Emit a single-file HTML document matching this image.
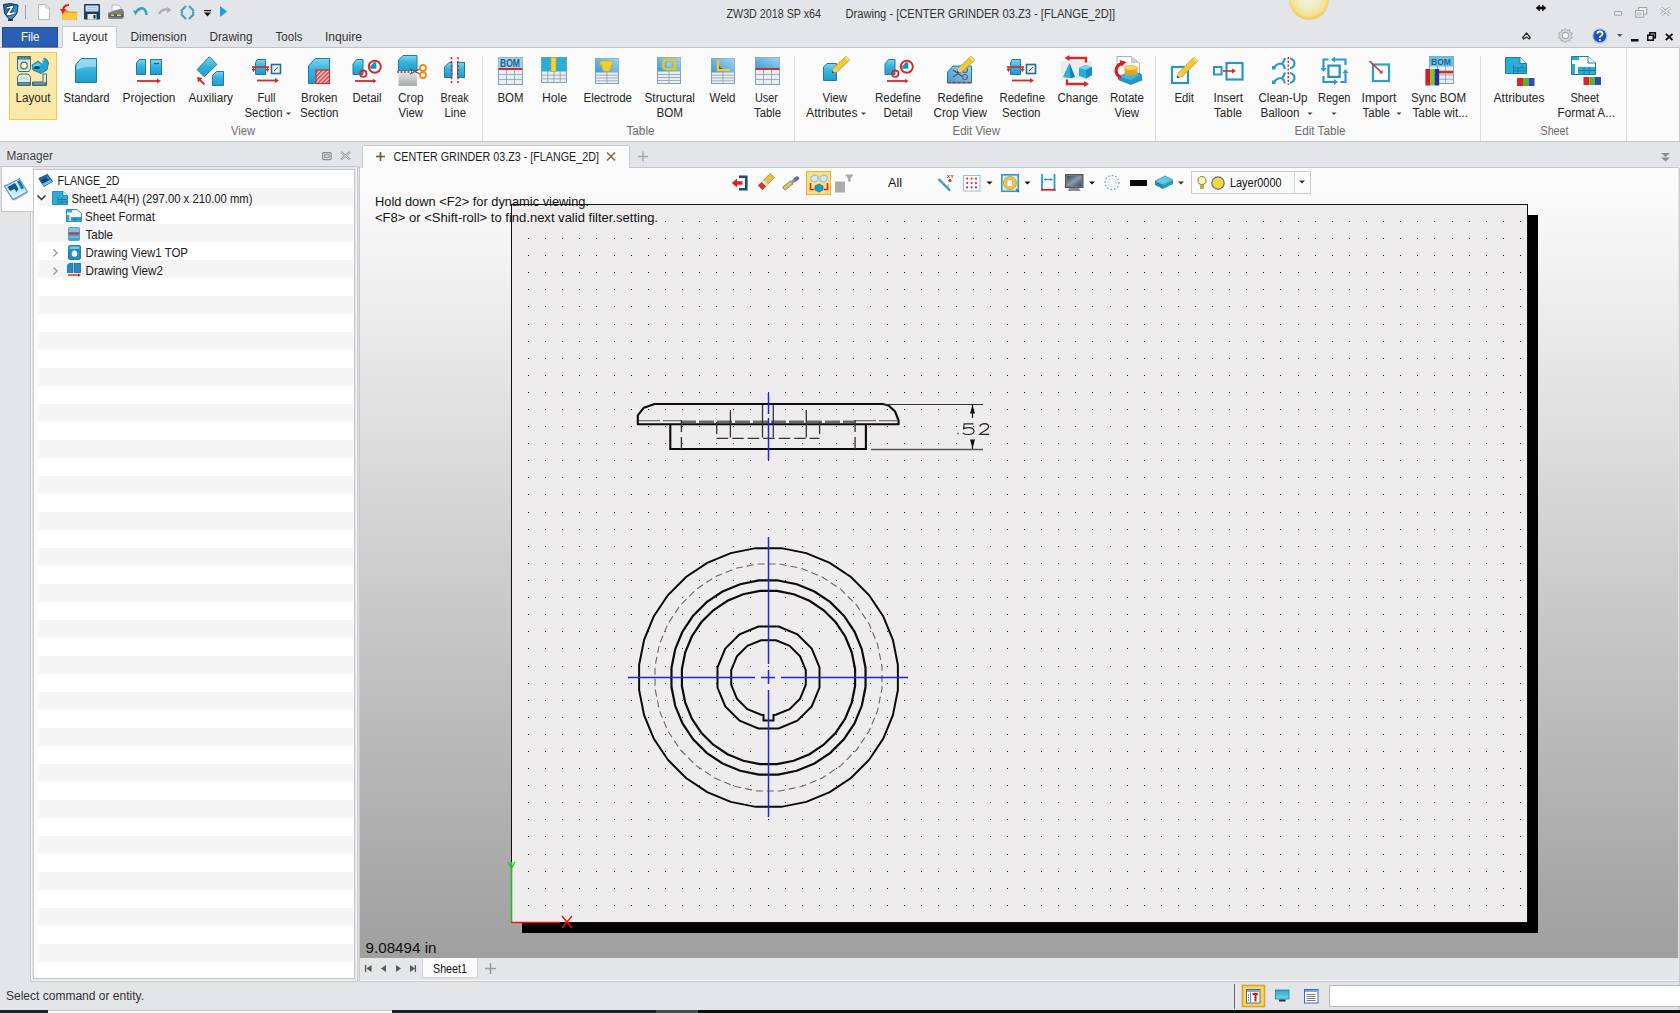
<!DOCTYPE html>
<html><head><meta charset="utf-8"><title>ZW3D</title>
<style>html,body{margin:0;padding:0;background:#e3e5e8;overflow:hidden}
svg{display:block} text{font-family:"Liberation Sans", sans-serif}</style></head>
<body><svg width="1680" height="1013" viewBox="0 0 1680 1013" shape-rendering="auto">
<rect x="0" y="0" width="1680" height="47" fill="#e3e5e8" />
<rect x="0" y="47" width="1680" height="94" fill="#fbfbfb" />
<line x1="0" y1="47.5" x2="1680" y2="47.5" stroke="#bfc2c6" stroke-width="1" />
<line x1="0" y1="141.5" x2="1680" y2="141.5" stroke="#c6c8cc" stroke-width="1" />
<rect x="0" y="142" width="1680" height="26" fill="#e3e5e8" />
<rect x="0" y="166" width="358" height="814" fill="#e3e5e8" />
<rect x="0" y="980" width="1680" height="30" fill="#e3e5e8" />
<rect x="0" y="1010" width="48" height="3" fill="#222326" />
<rect x="48" y="1010" width="344" height="1" fill="#c4c5c7" />
<rect x="48" y="1011" width="344" height="2" fill="#fafafa" />
<rect x="392" y="1010" width="264" height="3" fill="#1c1e22" />
<rect x="656" y="1010" width="42" height="3" fill="#4a4b4d" />
<rect x="698" y="1010" width="982" height="3" fill="#0c0c0c" />
<defs><linearGradient id="lg" x1="0" y1="0" x2="1" y2="1"><stop offset="0" stop-color="#1560a8"/><stop offset="1" stop-color="#38b4f2"/></linearGradient></defs>
<g transform="translate(2,3)"><path d="M1.5 1.5 L8.5 0.5 L16 2 L15 10 Q12.5 14.5 8.5 17 Q4.5 14 2.5 10 Z" fill="url(#lg)" stroke="#0f2f52" stroke-width="1"/><path d="M5 5 L10.5 3.5 L5.5 11.5 L12.5 10" fill="none" stroke="#111" stroke-width="3.2" stroke-linejoin="round"/><path d="M5 5 L10.5 3.5 L5.5 11.5 L12.5 10" fill="none" stroke="#fff" stroke-width="1.8" stroke-linejoin="round"/><path d="M6 17 H11" stroke="#111" stroke-width="1.5"/></g>
<line x1="25.5" y1="5" x2="25.5" y2="19" stroke="#9a9ca0" stroke-width="1" />
<g transform="translate(38,4)"><path d="M0.5 0.5 H8 L11.5 4 V15.5 H0.5 Z" fill="#fdfdfd" stroke="#b9bcc0"/><path d="M8 0.5 V4 H11.5" fill="none" stroke="#b9bcc0"/></g>
<g transform="translate(60,4)"><path d="M2 6 H8 L9 7.5 H17 V16 H2 Z" fill="#e9a521"/><path d="M3 9 H18 L16 16 H2 Z" fill="#f7c94a"/><path d="M9 1 Q3 1 3 7" fill="none" stroke="#d9261c" stroke-width="2.2"/><path d="M0 5 L3 10 L6 5 Z" fill="#d9261c"/></g>
<g transform="translate(84,4)"><rect x="0" y="0" width="16" height="15.5" rx="1" fill="#173d63"/><rect x="1.5" y="1.5" width="13" height="6" fill="#cfe3f2"/><path d="M3 3.5 H13 M3 5.5 H13" stroke="#8fb3cf" stroke-width=".7"/><rect x="3.5" y="10" width="9" height="5.5" fill="#e9e9e9"/><rect x="9.5" y="11" width="2" height="3.5" fill="#1a2a3a"/></g>
<g transform="translate(107,4)"><path d="M5 1 H12 L14 4 V7 H5 Z" fill="#f7f7f7" stroke="#9a9a9a" stroke-width=".6"/><path d="M3 8 L13 5 H15 Q17 6 17 9 V13 Q16 15 14 15 H3 Q1 15 1 13 V10 Q1 8 3 8 Z" fill="#7b7f83"/><path d="M2 10 H16 V13 H2 Z" fill="#5d6165"/><rect x="4" y="10.5" width="3" height="1.5" fill="#d8dc48"/><rect x="10" y="10.5" width="4" height="1.5" fill="#e6e04a"/></g>
<g transform="translate(133,6)"><path d="M2.5 6.5 Q6 1.5 10 2.5 Q13 3.5 13.5 9" fill="none" stroke="#36a2c8" stroke-width="2.6"/><path d="M0 4.5 L5 5 L2.5 9.5 Z" fill="#36a2c8"/></g>
<g transform="translate(157,6)"><path d="M2 8 Q5 2.5 11 3.5" fill="none" stroke="#a9acaf" stroke-width="2.4"/><path d="M10 1 L14.5 4 L10 7 Z" fill="#a9acaf"/></g>
<g transform="translate(179,4)"><g fill="none" stroke="#3ea4bf" stroke-width="2.2"><path d="M2 7 L7 2"/><path d="M10 2 L15 7"/><path d="M15 10 L10 15"/><path d="M7 15 L2 10"/></g><path d="M1 8.5 L4 6 L4 10 Z M16 8.5 L13 11 L13 7 Z" fill="#3ea4bf"/></g>
<g transform="translate(204,10)"><rect x="0" y="0" width="7" height="1.2" fill="#111"/><path d="M0 2.5 H7 L3.5 6.5 Z" fill="#111"/></g>
<g transform="translate(220,6)"><path d="M0 0 L7 5.5 L0 11 Z" fill="#1f9be8"/></g>
<text x="726.5" y="18" font-size="12" fill="#333" textLength="94.50" lengthAdjust="spacingAndGlyphs" >ZW3D 2018 SP x64</text>
<text x="845.5" y="18" font-size="12" fill="#333" textLength="269.50" lengthAdjust="spacingAndGlyphs" >Drawing - [CENTER GRINDER 03.Z3 - [FLANGE_2D]]</text>
<defs><radialGradient id="sun" cx="1309" cy="-2" r="21" gradientUnits="userSpaceOnUse"><stop offset="0" stop-color="#f4f3ee"/><stop offset=".55" stop-color="#f1ecbc"/><stop offset=".85" stop-color="#f2e08a"/><stop offset="1" stop-color="#f3c95a"/></radialGradient></defs>
<circle cx="1309" cy="0" r="19.8" fill="url(#sun)"/>
<g transform="translate(1536,5)"><path d="M0 3 L3.5 0 V2 H6.5 V0 L10 3 L6.5 6 V4 H3.5 V6 Z" fill="#111" stroke="#111" stroke-width=".6"/></g>
<g transform="translate(1614,11)"><rect x="0.6" y="0.6" width="7" height="3.6" rx="1" fill="#fff" stroke="#a4a6aa" stroke-width="1.2"/></g>
<g transform="translate(1635,7)"><rect x="3.6" y="0.6" width="8" height="6.5" fill="#fff" stroke="#a4a6aa" stroke-width="1.2"/><rect x="0.6" y="3.6" width="8" height="6.5" fill="#fff" stroke="#a4a6aa" stroke-width="1.2"/><rect x="2.6" y="6" width="3.5" height="2" fill="none" stroke="#a4a6aa" stroke-width=".9"/></g>
<g transform="translate(1660,7)"><path d="M1 1 L10 8 M10 1 L1 8" stroke="#a4a6aa" stroke-width="3.2"/><path d="M1 1 L10 8 M10 1 L1 8" stroke="#fff" stroke-width="1.4"/></g>
<g transform="translate(1522,32)"><path d="M0.8 5.5 L4.5 1 L8.2 5.5 L7.5 7 L4.5 5 L1.5 7 Z" fill="#fff" stroke="#222" stroke-width="1.2" stroke-linejoin="round"/></g>
<g transform="translate(1558,28)"><path d="M7.5 0.5 L9 2.5 L11.5 1.8 L11.8 4.2 L14.3 5 L13.3 7.5 L14.5 9.6 L12.2 10.6 L11.8 13.2 L9.3 12.8 L7.5 14.5 L5.7 12.8 L3.2 13.2 L2.8 10.6 L0.5 9.6 L1.7 7.5 L0.7 5 L3.2 4.2 L3.5 1.8 L6 2.5 Z" fill="#d9dadc" stroke="#a9abae" stroke-width="1"/><circle cx="7.5" cy="7.5" r="3.2" fill="#f4f4f4" stroke="#a9abae" stroke-width="1.2"/></g>
<g transform="translate(1592,28)"><circle cx="7.8" cy="7.8" r="7.6" fill="#9fc2e8"/><circle cx="7.8" cy="7.8" r="6.4" fill="#1f4fb8"/><path d="M5.3 5.8 Q5.5 3.3 8 3.3 Q10.5 3.4 10.5 5.7 Q10.4 7.2 8.8 8 Q7.9 8.5 7.9 9.8" fill="none" stroke="#fff" stroke-width="1.8"/><circle cx="7.9" cy="12" r="1.1" fill="#fff"/></g>
<g transform="translate(1617,34)"><path d="M0 0 H5.5 L2.75 3 Z" fill="#555"/></g>
<rect x="1631" y="39" width="7.5" height="2.5" fill="#111" />
<g transform="translate(1647,32)"><rect x="2.8" y="0.8" width="5.5" height="5" fill="none" stroke="#111" stroke-width="1.6"/><rect x="0.8" y="3.2" width="5.5" height="5" fill="#e3e5e8" stroke="#111" stroke-width="1.6"/></g>
<g transform="translate(1665,33)"><path d="M0.8 0.8 L7.5 7 M7.5 0.8 L0.8 7" stroke="#111" stroke-width="1.8"/></g>
<rect x="2" y="27" width="56" height="20" fill="#2b5fb4" />
<rect x="2.5" y="27.5" width="55" height="19.5" fill="none" stroke="#1d4c9c"/>
<text x="21" y="41" font-size="12" fill="#fff" textLength="18.50" lengthAdjust="spacingAndGlyphs" >File</text>
<rect x="62" y="26" width="55" height="22" fill="#fbfbfb" />
<path d="M62.5 47.5 V26.5 H116.5 V47.5" fill="none" stroke="#c9cbcf"/>
<text x="72.5" y="41" font-size="12" fill="#333" textLength="35.00" lengthAdjust="spacingAndGlyphs" >Layout</text>
<text x="130.5" y="41" font-size="12" fill="#333" textLength="56.00" lengthAdjust="spacingAndGlyphs" >Dimension</text>
<text x="209.5" y="41" font-size="12" fill="#333" textLength="43.00" lengthAdjust="spacingAndGlyphs" >Drawing</text>
<text x="275.5" y="41" font-size="12" fill="#333" textLength="27.00" lengthAdjust="spacingAndGlyphs" >Tools</text>
<text x="325" y="41" font-size="12" fill="#333" textLength="37.00" lengthAdjust="spacingAndGlyphs" >Inquire</text>
<defs>
<linearGradient id="tl" x1="0" y1="0" x2="0" y2="1"><stop offset="0" stop-color="#7fd6f0"/><stop offset=".45" stop-color="#36b4dc"/><stop offset="1" stop-color="#1f9ccb"/></linearGradient>
<linearGradient id="tlb" x1="1" y1="0" x2="0" y2="1"><stop offset="0" stop-color="#9fd6f2"/><stop offset="1" stop-color="#3d9ad6"/></linearGradient>
<linearGradient id="gr" x1="0" y1="0" x2="0" y2="1"><stop offset="0" stop-color="#e8e8e8"/><stop offset="1" stop-color="#a9abad"/></linearGradient>
<pattern id="hatch" width="3" height="3" patternUnits="userSpaceOnUse" patternTransform="rotate(45)"><rect width="3" height="3" fill="#f2d5d5"/><rect width="1.5" height="3" fill="#d23a3a"/></pattern>
</defs>
<rect x="9.5" y="52.5" width="47" height="67" fill="#fce9a9" stroke="#f2c94c"/>
<g transform="translate(17,56)"><path d="M0.5 0.5 H13.5 V13 L12 15.5 H2 L0.5 13 Z" fill="#dbe9e4" stroke="#3f6d7c"/><rect x="0.5" y="0.5" width="13" height="3" fill="#3f6d7c"/><path d="M2 2 H12" stroke="#a9c9d6" stroke-width=".8" stroke-dasharray="2 1"/><circle cx="7" cy="9.5" r="3.3" fill="#fff6c8" stroke="#4d6f66" stroke-width="1.2"/>
<path d="M15 9 L21 5 L25 8 L27 2 Q31 3 31.5 7 L30 14 L24 17.5 L16 14 Z" fill="#1fa6d6" stroke="#156f9a" stroke-width=".8"/><path d="M15.5 9.5 L21 6.5 L24 9 L18 12 Z" fill="#5fd0f2"/><ellipse cx="20" cy="11.5" rx="3" ry="1.6" fill="#0d3f5f"/><path d="M25 8 L27 2.5" stroke="#7fdcf5" stroke-width="1"/>
<path d="M0.5 29.5 V22 Q0.5 18 5 18 H9 Q13.5 18 13.5 22 V29.5 Z" fill="#dbe9e4" stroke="#3f6d7c"/><rect x="0.5" y="26" width="13" height="3.5" fill="#3f6d7c"/><path d="M2 27.8 H12" stroke="#a9c9d6" stroke-width=".8"/><path d="M3 24 Q7 20 11 24" fill="none" stroke="#b9d4c8" stroke-width="1"/>
<path d="M15.5 29.5 V26 H26 V18 H29.5 V29.5 Z" fill="#dbe9e4" stroke="#3f6d7c"/><rect x="15.5" y="26.3" width="14" height="3.2" fill="#3f6d7c"/><path d="M17 27.9 H28" stroke="#a9c9d6" stroke-width=".8"/></g>
<g transform="translate(75,58)"><path d="M6 0.5 H21.5 V24.5 H0.5 V7 Z" fill="url(#tl)" stroke="#1b7ea6"/><path d="M6 1.5 H21 V9 Q10 8 1.5 12 V7 Z" fill="#a6e1f3" opacity=".7"/></g>
<g transform="translate(136,59)"><path d="M3 0.5 H9.5 V15.5 H0.5 V4 Z" fill="url(#tl)" stroke="#1b7ea6"/><rect x="14.5" y="0.5" width="11" height="15" fill="url(#tl)" stroke="#1b7ea6"/><rect x="18" y="4" width="5" height="1.2" fill="#1b5a7a"/><path d="M1 22 H22" stroke="#d42a2a" stroke-width="1.8"/><path d="M21 19.5 L25 22 L21 24.5 Z" fill="#d42a2a"/></g>
<path d="M209.4 56.7 L216.9 64.5 L204.2 76.7 L197.1 69.6 Z" fill="url(#tl)" stroke="#1b7ea6"/><path d="M216.5 71.5 H223.5 V85.5 H212.5 V75.5 Z" fill="url(#tl)" stroke="#1b7ea6"/><path d="M204.5 84.5 L199.5 79.5" stroke="#d42a2a" stroke-width="1.8"/><path d="M197 77 L202.5 78 L198 82.5 Z" fill="#d42a2a"/>
<g transform="translate(252,59)"><path d="M5 0.5 H13.5 V15.5 H3.5 V4 Z" fill="url(#tl)" stroke="#1b7ea6"/><path d="M0 8 H17" stroke="#d42a2a" stroke-width="1.6"/><path d="M1.5 8 V11 M15.5 8 V11" stroke="#d42a2a" stroke-width="1.6"/><path d="M-.5 10 L1.5 13 L3.5 10 Z M13.5 10 L15.5 13 L17.5 10Z" fill="#d42a2a"/><rect x="19.5" y="5.5" width="9" height="9" fill="#e8f6fb" stroke="#1f6f99" stroke-width="1.6"/><path d="M22 12 L26 8" stroke="#d42a2a" stroke-width="1"/><path d="M5 21.5 H24" stroke="#d42a2a" stroke-width="1.8"/><path d="M23 19 L27 21.5 L23 24 Z" fill="#d42a2a"/></g>
<g transform="translate(308,58)"><path d="M7 0.5 H21.5 V25.5 H0.5 V8 Z" fill="url(#tl)" stroke="#1b7ea6"/><rect x="8" y="12" width="13.5" height="13.5" fill="url(#hatch)" stroke="#d42a2a" stroke-width="1.2"/></g>
<g transform="translate(352,59)"><path d="M4.5 0.5 H11 V15.5 H1 V5 Z" fill="url(#tl)" stroke="#1b7ea6"/><circle cx="11.3" cy="14.7" r="3.2" fill="none" stroke="#d42a2a" stroke-width="1.8"/><circle cx="22.8" cy="7.8" r="6" fill="#fff" stroke="#d42a2a" stroke-width="2"/><path d="M20 5.5 L21.5 3.3 H24.3 V9.8 H18.2 V7 Z" fill="#1f8fc0"/><path d="M3 22 H22" stroke="#d42a2a" stroke-width="1.8"/><path d="M21 19.8 L24.5 22 L21 24.2 Z" fill="#d42a2a"/></g>
<g transform="translate(398,55)"><path d="M5 0.5 H19 V16 H0.5 V5 Z" fill="url(#tl)" stroke="#1b7ea6"/><path d="M0.5 16 H19 V31 H0.5 Z" fill="url(#gr)"/><path d="M-1 17 H14" stroke="#d42a2a" stroke-width="1.4" stroke-dasharray="2 1.5"/><path d="M12 14 L22 19 M12 19 L22 14" stroke="#555" stroke-width="1.2"/><circle cx="25" cy="13" r="3" fill="none" stroke="#ee8c1e" stroke-width="1.8"/><circle cx="25" cy="20" r="3" fill="none" stroke="#ee8c1e" stroke-width="1.8"/></g>
<g transform="translate(444,57)"><path d="M5 5.5 H8 V20.5 H0.5 V10 Z" fill="url(#tl)" stroke="#1b7ea6"/><rect x="13.5" y="5.5" width="7" height="15" fill="url(#tl)" stroke="#1b7ea6"/><path d="M7.5 0 V28 M14 0 V28" stroke="#d42a2a" stroke-width="1.6" stroke-dasharray="2.2 1.8"/></g>
<line x1="482.5" y1="56" x2="482.5" y2="141" stroke="#dcdcdc" stroke-width="1" />
<line x1="794.5" y1="56" x2="794.5" y2="141" stroke="#dcdcdc" stroke-width="1" />
<line x1="1155.5" y1="56" x2="1155.5" y2="141" stroke="#dcdcdc" stroke-width="1" />
<line x1="1480.5" y1="56" x2="1480.5" y2="141" stroke="#dcdcdc" stroke-width="1" />
<line x1="1626.5" y1="48" x2="1626.5" y2="141" stroke="#dcdcdc" stroke-width="1" />
<line x1="1679.5" y1="47" x2="1679.5" y2="141" stroke="#c9cbce" stroke-width="1" />
<g transform="translate(498,57)"><rect x="0.5" y="0.5" width="24" height="27" fill="#e8eef2" stroke="#8aa0ad"/><rect x="0.5" y="0.5" width="24" height="12" fill="#9fd3ee"/><path d="M0.5 17.5 H24.5" stroke="#8aa0ad" stroke-width=".8"/><path d="M0.5 22.5 H24.5" stroke="#8aa0ad" stroke-width=".8"/><path d="M8.5 12 V27.5" stroke="#8aa0ad" stroke-width=".8"/><path d="M16.5 12 V27.5" stroke="#8aa0ad" stroke-width=".8"/><rect x="0.5" y="11" width="24" height="2" fill="#d42a2a"/><text x="2" y="10" font-size="10" font-weight="bold" fill="#1c5f8c" textLength="20" lengthAdjust="spacingAndGlyphs">BOM</text></g>
<g transform="translate(541,57)"><rect x="0.5" y="0.5" width="25" height="25" fill="#e8eef2" stroke="#8aa0ad"/><rect x="0.5" y="0.5" width="25" height="14" fill="#2aaed8"/><path d="M0.5 18.2 H25.5" stroke="#8aa0ad" stroke-width=".8"/><path d="M0.5 21.8 H25.5" stroke="#8aa0ad" stroke-width=".8"/><path d="M6.8 14 V25.5" stroke="#8aa0ad" stroke-width=".8"/><path d="M13.0 14 V25.5" stroke="#8aa0ad" stroke-width=".8"/><path d="M19.2 14 V25.5" stroke="#8aa0ad" stroke-width=".8"/><rect x="10" y="0.5" width="5" height="14" fill="#f3d23a" stroke="#c9a218" stroke-width=".6"/></g>
<g transform="translate(595,58)"><rect x="0.5" y="0.5" width="23" height="25" fill="#e8eef2" stroke="#8aa0ad"/><rect x="0.5" y="0.5" width="23" height="14" fill="url(#tlb)"/><path d="M0.5 17.2 H23.5" stroke="#8aa0ad" stroke-width=".8"/><path d="M0.5 20.0 H23.5" stroke="#8aa0ad" stroke-width=".8"/><path d="M0.5 22.8 H23.5" stroke="#8aa0ad" stroke-width=".8"/><path d="M12.0 14 V25.5" stroke="#8aa0ad" stroke-width=".8"/><path d="M5 3 H18 V7 H16 V9 Q16 13.5 11.5 13.5 Q7 13.5 7 9 V7 H5 Z" fill="#f4cf2b" stroke="#c9a218" stroke-width=".6"/></g>
<g transform="translate(657,57)"><rect x="0.5" y="0.5" width="23" height="26" fill="#e8eef2" stroke="#8aa0ad"/><rect x="0.5" y="0.5" width="23" height="14" fill="url(#tlb)"/><path d="M0.5 17.5 H23.5" stroke="#8aa0ad" stroke-width=".8"/><path d="M0.5 20.5 H23.5" stroke="#8aa0ad" stroke-width=".8"/><path d="M0.5 23.5 H23.5" stroke="#8aa0ad" stroke-width=".8"/><path d="M12.0 14 V26.5" stroke="#8aa0ad" stroke-width=".8"/><path d="M7 3 H16 L18 5 V12 H8 L6 10 Z" fill="none" stroke="#e8c51e" stroke-width="2.6"/><rect x="9.5" y="5.5" width="5" height="4" fill="#8fd0ec"/></g>
<g transform="translate(711,58)"><rect x="0.5" y="0.5" width="23" height="25" fill="#e8eef2" stroke="#8aa0ad"/><rect x="0.5" y="0.5" width="23" height="14" fill="url(#tlb)"/><path d="M0.5 17.2 H23.5" stroke="#8aa0ad" stroke-width=".8"/><path d="M0.5 20.0 H23.5" stroke="#8aa0ad" stroke-width=".8"/><path d="M0.5 22.8 H23.5" stroke="#8aa0ad" stroke-width=".8"/><path d="M12.0 14 V25.5" stroke="#8aa0ad" stroke-width=".8"/><path d="M7 2 V12 H19" fill="none" stroke="#f2cb2a" stroke-width="2.4"/><path d="M8 7 Q9 11 14 11 H8 Z" fill="#d82020"/></g>
<g transform="translate(755,57)"><rect x="0.5" y="0.5" width="24" height="27" fill="#e8eef2" stroke="#8aa0ad"/><rect x="0.5" y="0.5" width="24" height="12" fill="url(#tlb)"/><path d="M0.5 17.5 H24.5" stroke="#8aa0ad" stroke-width=".8"/><path d="M0.5 22.5 H24.5" stroke="#8aa0ad" stroke-width=".8"/><path d="M8.5 12 V27.5" stroke="#8aa0ad" stroke-width=".8"/><path d="M16.5 12 V27.5" stroke="#8aa0ad" stroke-width=".8"/><rect x="0.5" y="11" width="24" height="2" fill="#d42a2a"/></g>
<g transform="translate(823,57)"><path d="M4 6.5 H13.5 V23.5 H0.5 V10 Z" fill="url(#tl)" stroke="#1b7ea6"/><g transform="translate(9,16) rotate(-43.2)"><path d="M0 0 L5 -2.7 H21.93171219946131 V2.7 H5 Z" fill="#f2c835" stroke="#b58b12" stroke-width=".6"/><path d="M0 0 L5 -2.7 V2.7 Z" fill="#e8c9a0"/><path d="M0 0 L2 -1.4 V1.4Z" fill="#333"/><rect x="19.93171219946131" y="-2.7" width="2" height="5.4" fill="#f6e27a"/></g></g>
<g transform="translate(884,59)"><path d="M4.5 0.5 H11 V15.5 H1 V5 Z" fill="url(#tl)" stroke="#1b7ea6"/><circle cx="11.3" cy="14.7" r="3.2" fill="none" stroke="#d42a2a" stroke-width="1.8"/><circle cx="22.8" cy="7.8" r="6" fill="#fff" stroke="#d42a2a" stroke-width="2"/><path d="M20 5.5 L21.5 3.3 H24.3 V9.8 H18.2 V7 Z" fill="#1f8fc0"/><path d="M3 22 H22" stroke="#d42a2a" stroke-width="1.8"/><path d="M21 19.8 L24.5 22 L21 24.2 Z" fill="#d42a2a"/></g>
<g transform="translate(947,57)"><path d="M6 9 H24.5 V26 H0.5 V15 Z" fill="url(#tlb)" stroke="#1b7ea6"/><path d="M0.5 25.5 H24.5" stroke="#d42a2a" stroke-width="1.6" stroke-dasharray="3 2"/><path d="M6 13 L16 20 M6 20 L16 13" stroke="#555" stroke-width="1.2"/><circle cx="18" cy="13" r="2.5" fill="none" stroke="#666" stroke-width="1.2"/><circle cx="18" cy="20" r="2.5" fill="none" stroke="#666" stroke-width="1.2"/><g transform="translate(10,16) rotate(-43.2)"><path d="M0 0 L5 -2.7 H21.93171219946131 V2.7 H5 Z" fill="#f2c835" stroke="#b58b12" stroke-width=".6"/><path d="M0 0 L5 -2.7 V2.7 Z" fill="#e8c9a0"/><path d="M0 0 L2 -1.4 V1.4Z" fill="#333"/><rect x="19.93171219946131" y="-2.7" width="2" height="5.4" fill="#f6e27a"/></g></g>
<g transform="translate(1007,59)"><path d="M5 0.5 H13.5 V15.5 H3.5 V4 Z" fill="url(#tl)" stroke="#1b7ea6"/><path d="M0 8 H17" stroke="#d42a2a" stroke-width="1.6"/><path d="M1.5 8 V11 M15.5 8 V11" stroke="#d42a2a" stroke-width="1.6"/><path d="M-.5 10 L1.5 13 L3.5 10 Z M13.5 10 L15.5 13 L17.5 10Z" fill="#d42a2a"/><rect x="19.5" y="5.5" width="9" height="9" fill="#e8f6fb" stroke="#1f6f99" stroke-width="1.6"/><path d="M22 12 L26 8" stroke="#d42a2a" stroke-width="1"/><path d="M5 21.5 H24" stroke="#d42a2a" stroke-width="1.8"/><path d="M23 19 L27 21.5 L23 24 Z" fill="#d42a2a"/></g>
<g transform="translate(1061,56)"><rect x="0" y="5" width="31" height="18.7" fill="#ececec"/><path d="M8.5 7 L2 21 Q8 23 14 21 Z" fill="#2ab0dc"/><path d="M8.5 7 L9.5 22 L14 21 Z" fill="#1782b4"/><path d="M18 12 L24 9 L31 11 V19 L25 22.5 L18 20 Z" fill="#2aaad8"/><path d="M18 12 L24 9 L31 11 L25 14 Z" fill="#74d2f0"/><path d="M25 14 V22.5 L31 19 V11 Z" fill="#1a8cc0"/><path d="M25 6.5 V2 H7" fill="none" stroke="#d42a2a" stroke-width="2.4"/><path d="M8.5 -1 L3.5 2 L8.5 5 Z" fill="#d42a2a"/><path d="M6 23.5 V28 H24" fill="none" stroke="#d42a2a" stroke-width="2.4"/><path d="M23 25 L28 28 L23 31 Z" fill="#d42a2a"/></g>
<g transform="translate(1111,56)"><path d="M6 0.5 H20 L28.5 7 V19 H6 Z" fill="#fafafa" stroke="#9aa0a6" stroke-width=".8"/><path d="M20 0.5 V7 H28.5 Z" fill="#c9ced3"/><path d="M7 22 L17 16 L30 18 L31 24 L20 28.5 L8 24 Z" fill="#1f9ac8" stroke="#136a90" stroke-width=".6"/><path d="M9 21 L17 17 L29 19 L20 24 Z" fill="#3cb8e2"/><rect x="13.5" y="12" width="13" height="5" fill="#eeb420"/><ellipse cx="20" cy="17" rx="6.5" ry="2.5" fill="#e6a416"/><ellipse cx="20" cy="12" rx="6.5" ry="2.5" fill="#f8d860" stroke="#c89010" stroke-width=".5"/><path d="M11 7 Q5 9.5 5 15 Q5.5 19.5 10 21.5" fill="none" stroke="#e01818" stroke-width="3"/><path d="M8.5 4 L15.5 6 L10.5 10.5 Z" fill="#e01818"/></g>
<g transform="translate(1171,58)"><rect x="1" y="9" width="16" height="16" fill="#fff" stroke="#2996c6" stroke-width="2.2"/><g transform="translate(6,20) rotate(-45.0)"><path d="M0 0 L5 -2.7 H26.870057685088806 V2.7 H5 Z" fill="#f2c835" stroke="#b58b12" stroke-width=".6"/><path d="M0 0 L5 -2.7 V2.7 Z" fill="#e8c9a0"/><path d="M0 0 L2 -1.4 V1.4Z" fill="#333"/><rect x="24.870057685088806" y="-2.7" width="2" height="5.4" fill="#f6e27a"/></g></g>
<g transform="translate(1213,62)"><rect x="1" y="5" width="7.5" height="7.5" fill="#fff" stroke="#2996c6" stroke-width="2"/><rect x="13.5" y="1" width="16" height="16.5" fill="#fff" stroke="#2996c6" stroke-width="2.2"/><path d="M10 9 H20" stroke="#d42a2a" stroke-width="1.6"/><path d="M19 6.5 L23 9 L19 11.5 Z" fill="#d42a2a"/></g>
<g fill="none" stroke="#2a9cc8" stroke-width="2.2" stroke-linecap="butt"><path d="M1274 68 Q1276 63.5 1282 63.5 M1282 63.5 Q1284 62 1285 58 M1282 63.5 Q1284 65 1285 69"/><path d="M1290 58.3 Q1294.5 60 1294.5 63.5 Q1294.5 67 1290 68.5"/><path d="M1274 82.5 Q1276 78 1282 78 M1282 78 Q1284 76.5 1285 72.5 M1282 78 Q1284 79.5 1285 83.5"/><path d="M1290 72.8 Q1294.5 74.5 1294.5 78 Q1294.5 81.5 1290 83"/></g>
<rect x="1272" y="66" width="3.5" height="3.5" fill="#2a9cc8"/><rect x="1272" y="80.5" width="3.5" height="3.5" fill="#2a9cc8"/>
<path d="M1288.3 57 V85" stroke="#d8262a" stroke-width="1.5" stroke-dasharray="2.2 1.6"/>
<rect x="1328.4" y="65.6" width="11.3" height="11.3" fill="none" stroke="#2a8fbf" stroke-width="2.2"/>
<g fill="none" stroke="#2a9cc8" stroke-width="2.2"><path d="M1345.5 65 V59.5 H1334"/><path d="M1328.5 59.5 H1323.5 V69"/><path d="M1323.5 76 V82 H1335"/><path d="M1340.5 82 H1345.5 V72"/></g>
<path d="M1331 59.5 L1335 56.5 V62.5 Z M1323.5 72 L1320.5 68 H1326.5 Z M1338 82 L1334 79 V85 Z M1345.5 69 L1342.5 73 H1348.5 Z" fill="#2a9cc8"/>
<g transform="translate(1369,60)"><rect x="4" y="4.5" width="16" height="16.5" fill="#fff" stroke="#2c9fcf" stroke-width="2.2"/><path d="M0.5 1 L12 12" stroke="#d42a2a" stroke-width="1.6"/><path d="M10 13.5 L13.5 13.5 L13.5 10 Z" fill="#d42a2a"/></g>
<g transform="translate(1429,56)"><rect x="0.5" y="0.5" width="24" height="27" fill="#e8eef2" stroke="#8aa0ad"/><rect x="0.5" y="0.5" width="24" height="10" fill="#6dbfe6"/><path d="M0.5 14.8 H24.5" stroke="#8aa0ad" stroke-width=".8"/><path d="M0.5 19.0 H24.5" stroke="#8aa0ad" stroke-width=".8"/><path d="M0.5 23.2 H24.5" stroke="#8aa0ad" stroke-width=".8"/><path d="M8.5 10 V27.5" stroke="#8aa0ad" stroke-width=".8"/><path d="M16.5 10 V27.5" stroke="#8aa0ad" stroke-width=".8"/><text x="2" y="8.8" font-size="9.5" font-weight="bold" fill="#1a6a9a" textLength="20" lengthAdjust="spacingAndGlyphs">BOM</text><rect x="10" y="15" width="14" height="2.4" fill="#d42a2a"/></g>
<rect x="1425.4" y="69" width="4.8" height="16.5" fill="#d0202a"/><rect x="1430.2" y="69" width="4.4" height="16.5" fill="#7cc42a"/><rect x="1434.6" y="69" width="4.6" height="16.5" fill="#2a2f9a"/>
<g transform="translate(1505,57)"><path d="M0.5 0.5 H15 L21.5 6.5 V16.5 H0.5 Z" fill="#2aaed8" stroke="#1b7ea6"/><path d="M15 0.5 V6.5 H21.5" fill="#fff" stroke="#1b7ea6"/><path d="M8.5 8.5 V16.5 M8.5 11 H21.5 M8.5 13.8 H21.5 M13 11 V16.5 M17 8.5 V11" stroke="#1b6f96" stroke-width=".9"/><rect x="12" y="21" width="6" height="8" fill="#e0232a"/><rect x="18" y="21" width="5.5" height="8" fill="#55b431"/><rect x="23.5" y="21" width="6" height="8" fill="#2f4fa6"/></g>
<g transform="translate(1571,56)"><path d="M0.5 0.5 H17 L24.5 7 V18.5 H0.5 Z" fill="#fff" stroke="#1b7ea6"/><path d="M17 0.5 V7 H24.5" fill="#fff" stroke="#1b7ea6"/><rect x="1" y="1" width="7" height="3" fill="#2aaed8"/><rect x="1" y="8" width="3" height="10" fill="#2aaed8"/><rect x="7" y="11" width="17" height="7" fill="#2aaed8"/><path d="M7 14.5 H24 M13 11 V18 M18 11 V18" stroke="#1b6f96" stroke-width=".9"/><rect x="12.5" y="21" width="6" height="8" fill="#e0232a"/><rect x="18.5" y="21" width="5.5" height="8" fill="#55b431"/><rect x="24" y="21" width="6" height="8" fill="#2f4fa6"/></g>
<text x="15.5" y="101.5" font-size="12" fill="#262626" textLength="35.00" lengthAdjust="spacingAndGlyphs" >Layout</text>
<text x="63.5" y="101.5" font-size="12" fill="#262626" textLength="46.00" lengthAdjust="spacingAndGlyphs" >Standard</text>
<text x="122.5" y="101.5" font-size="12" fill="#262626" textLength="53.00" lengthAdjust="spacingAndGlyphs" >Projection</text>
<text x="188.5" y="101.5" font-size="12" fill="#262626" textLength="44.50" lengthAdjust="spacingAndGlyphs" >Auxiliary</text>
<text x="257.5" y="101.5" font-size="12" fill="#262626" textLength="18.00" lengthAdjust="spacingAndGlyphs" >Full</text>
<text x="244.5" y="116.5" font-size="12" fill="#262626" textLength="38.00" lengthAdjust="spacingAndGlyphs" >Section</text>
<text x="301" y="101.5" font-size="12" fill="#262626" textLength="36.50" lengthAdjust="spacingAndGlyphs" >Broken</text>
<text x="300" y="116.5" font-size="12" fill="#262626" textLength="38.50" lengthAdjust="spacingAndGlyphs" >Section</text>
<text x="352.5" y="101.5" font-size="12" fill="#262626" textLength="29.00" lengthAdjust="spacingAndGlyphs" >Detail</text>
<text x="398" y="101.5" font-size="12" fill="#262626" textLength="25.50" lengthAdjust="spacingAndGlyphs" >Crop</text>
<text x="398.5" y="116.5" font-size="12" fill="#262626" textLength="24.50" lengthAdjust="spacingAndGlyphs" >View</text>
<text x="440.5" y="101.5" font-size="12" fill="#262626" textLength="28.00" lengthAdjust="spacingAndGlyphs" >Break</text>
<text x="444.5" y="116.5" font-size="12" fill="#262626" textLength="21.50" lengthAdjust="spacingAndGlyphs" >Line</text>
<text x="497.5" y="101.5" font-size="12" fill="#262626" textLength="26.00" lengthAdjust="spacingAndGlyphs" >BOM</text>
<text x="542" y="101.5" font-size="12" fill="#262626" textLength="25.00" lengthAdjust="spacingAndGlyphs" >Hole</text>
<text x="583.5" y="101.5" font-size="12" fill="#262626" textLength="48.50" lengthAdjust="spacingAndGlyphs" >Electrode</text>
<text x="644.5" y="101.5" font-size="12" fill="#262626" textLength="50.50" lengthAdjust="spacingAndGlyphs" >Structural</text>
<text x="656.5" y="116.5" font-size="12" fill="#262626" textLength="26.50" lengthAdjust="spacingAndGlyphs" >BOM</text>
<text x="709.5" y="101.5" font-size="12" fill="#262626" textLength="26.00" lengthAdjust="spacingAndGlyphs" >Weld</text>
<text x="755" y="101.5" font-size="12" fill="#262626" textLength="23.00" lengthAdjust="spacingAndGlyphs" >User</text>
<text x="754" y="116.5" font-size="12" fill="#262626" textLength="27.00" lengthAdjust="spacingAndGlyphs" >Table</text>
<text x="822.5" y="101.5" font-size="12" fill="#262626" textLength="24.50" lengthAdjust="spacingAndGlyphs" >View</text>
<text x="806" y="116.5" font-size="12" fill="#262626" textLength="51.50" lengthAdjust="spacingAndGlyphs" >Attributes</text>
<text x="875" y="101.5" font-size="12" fill="#262626" textLength="46.00" lengthAdjust="spacingAndGlyphs" >Redefine</text>
<text x="883.5" y="116.5" font-size="12" fill="#262626" textLength="29.00" lengthAdjust="spacingAndGlyphs" >Detail</text>
<text x="937.5" y="101.5" font-size="12" fill="#262626" textLength="45.50" lengthAdjust="spacingAndGlyphs" >Redefine</text>
<text x="933.5" y="116.5" font-size="12" fill="#262626" textLength="53.50" lengthAdjust="spacingAndGlyphs" >Crop View</text>
<text x="999.5" y="101.5" font-size="12" fill="#262626" textLength="45.50" lengthAdjust="spacingAndGlyphs" >Redefine</text>
<text x="1002" y="116.5" font-size="12" fill="#262626" textLength="38.50" lengthAdjust="spacingAndGlyphs" >Section</text>
<text x="1057.5" y="101.5" font-size="12" fill="#262626" textLength="40.50" lengthAdjust="spacingAndGlyphs" >Change</text>
<text x="1110" y="101.5" font-size="12" fill="#262626" textLength="34.00" lengthAdjust="spacingAndGlyphs" >Rotate</text>
<text x="1114.5" y="116.5" font-size="12" fill="#262626" textLength="24.50" lengthAdjust="spacingAndGlyphs" >View</text>
<text x="1174.5" y="101.5" font-size="12" fill="#262626" textLength="19.50" lengthAdjust="spacingAndGlyphs" >Edit</text>
<text x="1213.5" y="101.5" font-size="12" fill="#262626" textLength="29.50" lengthAdjust="spacingAndGlyphs" >Insert</text>
<text x="1214" y="116.5" font-size="12" fill="#262626" textLength="28.00" lengthAdjust="spacingAndGlyphs" >Table</text>
<text x="1258.5" y="101.5" font-size="12" fill="#262626" textLength="49.00" lengthAdjust="spacingAndGlyphs" >Clean-Up</text>
<text x="1260.5" y="116.5" font-size="12" fill="#262626" textLength="39.00" lengthAdjust="spacingAndGlyphs" >Balloon</text>
<text x="1318" y="101.5" font-size="12" fill="#262626" textLength="32.50" lengthAdjust="spacingAndGlyphs" >Regen</text>
<text x="1361.5" y="101.5" font-size="12" fill="#262626" textLength="35.00" lengthAdjust="spacingAndGlyphs" >Import</text>
<text x="1362.5" y="116.5" font-size="12" fill="#262626" textLength="27.50" lengthAdjust="spacingAndGlyphs" >Table</text>
<text x="1411" y="101.5" font-size="12" fill="#262626" textLength="55.00" lengthAdjust="spacingAndGlyphs" >Sync BOM</text>
<text x="1412.5" y="116.5" font-size="12" fill="#262626" textLength="55.50" lengthAdjust="spacingAndGlyphs" >Table wit...</text>
<text x="1493.5" y="101.5" font-size="12" fill="#262626" textLength="51.00" lengthAdjust="spacingAndGlyphs" >Attributes</text>
<text x="1570.5" y="101.5" font-size="12" fill="#262626" textLength="28.50" lengthAdjust="spacingAndGlyphs" >Sheet</text>
<text x="1557.5" y="116.5" font-size="12" fill="#262626" textLength="57.50" lengthAdjust="spacingAndGlyphs" >Format A...</text>
<path d="M286.0 112.5 H291.0 L288.5 115.0 Z" fill="#444"/>
<path d="M861.0 112.5 H866.0 L863.5 115.0 Z" fill="#444"/>
<path d="M1307.5 112.5 H1312.5 L1310 115.0 Z" fill="#444"/>
<path d="M1331.5 112.5 H1336.5 L1334 115.0 Z" fill="#444"/>
<path d="M1396.5 112.5 H1401.5 L1399 115.0 Z" fill="#444"/>
<text x="231" y="134.5" font-size="12" fill="#6e6e6e" textLength="24.00" lengthAdjust="spacingAndGlyphs" >View</text>
<text x="626.5" y="134.5" font-size="12" fill="#6e6e6e" textLength="28.00" lengthAdjust="spacingAndGlyphs" >Table</text>
<text x="952.5" y="134.5" font-size="12" fill="#6e6e6e" textLength="47.50" lengthAdjust="spacingAndGlyphs" >Edit View</text>
<text x="1294.5" y="134.5" font-size="12" fill="#6e6e6e" textLength="51.00" lengthAdjust="spacingAndGlyphs" >Edit Table</text>
<text x="1540.5" y="134.5" font-size="12" fill="#6e6e6e" textLength="28.00" lengthAdjust="spacingAndGlyphs" >Sheet</text>
<text x="6.5" y="160" font-size="12" fill="#444" textLength="46.50" lengthAdjust="spacingAndGlyphs" >Manager</text>
<g transform="translate(322,152)"><rect x="0.6" y="0.6" width="8.5" height="7" rx="1" fill="none" stroke="#8a8d92" stroke-width="1.2"/><rect x="2.6" y="2.8" width="4.5" height="2.6" fill="none" stroke="#8a8d92" stroke-width="1"/></g>
<g transform="translate(340,151)"><path d="M1 1 L10 8.5 M10 1 L1 8.5" stroke="#8a8d92" stroke-width="2.2"/><path d="M1 1 L10 8.5 M10 1 L1 8.5" stroke="#fff" stroke-width=".7"/></g>
<line x1="0" y1="166.5" x2="358" y2="166.5" stroke="#c4c6ca" stroke-width="1" />
<rect x="1" y="167" width="32" height="44" fill="#fcfcfc" />
<line x1="1.5" y1="167" x2="1.5" y2="211" stroke="#c4c6ca" stroke-width="1" />
<line x1="1" y1="211.5" x2="33" y2="211.5" stroke="#c4c6ca" stroke-width="1" />
<path d="M6 189 L14.5 201 L28 193 L25 191 Z" fill="#9a9c9e" opacity=".55"/>
<path d="M4.5 186.4 L19.4 178.7 L27.3 191.7 L13 199.6 Z" fill="#c6e8f8" stroke="#5f9fbf" stroke-width="1.2"/>
<path d="M7.5 187 L15 183 L18.5 189 L16.5 192 L14.5 189 L10 191 Z" fill="#0c5a8f"/><path d="M17 181.5 L19.5 180 L24 188 L21.5 189.5 Z" fill="#1a75b0"/><path d="M9 191 L14 197 L25 191" fill="none" stroke="#e6f6fd" stroke-width="1.5"/>
<rect x="33" y="169" width="322" height="810" fill="#ffffff" />
<rect x="33.5" y="169.5" width="321" height="809" fill="none" stroke="#c5c7cb"/>
<rect x="38" y="188" width="315" height="18" fill="#f5f5f5" />
<rect x="38" y="224" width="315" height="18" fill="#f5f5f5" />
<rect x="38" y="260" width="315" height="18" fill="#f5f5f5" />
<rect x="38" y="296" width="315" height="18" fill="#f5f5f5" />
<rect x="38" y="332" width="315" height="18" fill="#f5f5f5" />
<rect x="38" y="368" width="315" height="18" fill="#f5f5f5" />
<rect x="38" y="404" width="315" height="18" fill="#f5f5f5" />
<rect x="38" y="440" width="315" height="18" fill="#f5f5f5" />
<rect x="38" y="476" width="315" height="18" fill="#f5f5f5" />
<rect x="38" y="512" width="315" height="18" fill="#f5f5f5" />
<rect x="38" y="548" width="315" height="18" fill="#f5f5f5" />
<rect x="38" y="584" width="315" height="18" fill="#f5f5f5" />
<rect x="38" y="620" width="315" height="18" fill="#f5f5f5" />
<rect x="38" y="656" width="315" height="18" fill="#f5f5f5" />
<rect x="38" y="692" width="315" height="18" fill="#f5f5f5" />
<rect x="38" y="728" width="315" height="18" fill="#f5f5f5" />
<rect x="38" y="764" width="315" height="18" fill="#f5f5f5" />
<rect x="38" y="800" width="315" height="18" fill="#f5f5f5" />
<rect x="38" y="836" width="315" height="18" fill="#f5f5f5" />
<rect x="38" y="872" width="315" height="18" fill="#f5f5f5" />
<rect x="38" y="908" width="315" height="18" fill="#f5f5f5" />
<rect x="38" y="944" width="315" height="18" fill="#f5f5f5" />
<path d="M30.5 211 V981.5 H357.5 V166" fill="none" stroke="#c6c8cb"/>
<path d="M31.5 212 V980.5 H356.5 V167" fill="none" stroke="#f4f5f6"/>
<line x1="359.5" y1="166" x2="359.5" y2="981.5" stroke="#c6c8cb" stroke-width="1" />
<path d="M38.7 178.5 L47.4 174.3 L52.6 181.6 L43.9 186.4 Z" fill="#1669a3" stroke="#0f4f80" stroke-width=".8"/><path d="M41 180.5 L46 178 L48 181 L43 183.5 Z" fill="#0a3f70"/><path d="M42 184 L50.5 179.8 L52 181.8 L44 186 Z" fill="#6fc2ea"/><path d="M46.5 175.5 L49 179" stroke="#3a9ad0" stroke-width="1"/>
<text x="57.5" y="184.5" font-size="12.4" fill="#1a1a1a" textLength="62.00" lengthAdjust="spacingAndGlyphs" >FLANGE_2D</text>
<path d="M37.5 195.5 L41.5 199.5 L45.5 195.5" fill="none" stroke="#333" stroke-width="1.5"/>
<g transform="translate(52,191)"><path d="M0.5 0.5 H11 L15.5 4.5 V13.5 H0.5 Z" fill="#2aaed8" stroke="#1b7ea6" stroke-width=".8"/><path d="M11 0.5 V4.5 H15.5" fill="#fff" stroke="#1b7ea6" stroke-width=".8"/><path d="M6 6 V13 M6 8.5 H15 M6 11 H15 M10 6 V13" stroke="#1b6f96" stroke-width=".8"/></g>
<text x="71.5" y="202.5" font-size="12.4" fill="#1a1a1a" textLength="181.00" lengthAdjust="spacingAndGlyphs" >Sheet1 A4(H) (297.00 x 210.00 mm)</text>
<g transform="translate(66,209)"><path d="M0.5 0.5 H11 L15.5 4.5 V12.5 H0.5 Z" fill="#fff" stroke="#1b7ea6" stroke-width=".9"/><rect x="1" y="1" width="5" height="2.5" fill="#2aaed8"/><rect x="1" y="6" width="2.5" height="6" fill="#2aaed8"/><rect x="5" y="8" width="10" height="4.5" fill="#2aaed8"/><path d="M5 10 H15 M9 8 V12.5" stroke="#1b6f96" stroke-width=".7"/></g>
<text x="85" y="220.5" font-size="12.4" fill="#1a1a1a" textLength="70.00" lengthAdjust="spacingAndGlyphs" >Sheet Format</text>
<g transform="translate(68,227)"><rect x="0.5" y="0.5" width="11" height="13" rx="1" fill="#3aa6cf" stroke="#2a8fb8" stroke-width=".6"/><rect x="1" y="1" width="10" height="4" fill="#7fc3e2"/><rect x="0.5" y="5.5" width="11" height="2" fill="#d9343a"/><path d="M1 10 H11" stroke="#a7d8ee" stroke-width=".8"/></g>
<text x="85.5" y="238.5" font-size="12.4" fill="#1a1a1a" textLength="27.50" lengthAdjust="spacingAndGlyphs" >Table</text>
<path d="M53.5 249.5 L57 253 L53.5 256.5" fill="none" stroke="#999" stroke-width="1.4"/>
<g transform="translate(68,245)"><rect x="0.5" y="0.5" width="12" height="14" rx="1.5" fill="#1f8fc0" stroke="#16699a" stroke-width=".8"/><rect x="1.5" y="1.5" width="10" height="2.5" fill="#7cc6e6"/><circle cx="6.5" cy="9" r="2.8" fill="#fff"/><path d="M4 7 L6.5 5 L9 7" fill="#fff"/></g>
<text x="85.5" y="256.5" font-size="12.4" fill="#1a1a1a" textLength="102.50" lengthAdjust="spacingAndGlyphs" >Drawing View1 TOP</text>
<path d="M53.5 267.5 L57 271 L53.5 274.5" fill="none" stroke="#999" stroke-width="1.4"/>
<g transform="translate(67,263)"><path d="M2 0.5 H6 V9.5 H0.5 V2 Z" fill="#1f8fc0" stroke="#16699a" stroke-width=".8"/><rect x="7.5" y="0.5" width="6" height="9" fill="#1f8fc0" stroke="#16699a" stroke-width=".8"/><path d="M1 12 H12" stroke="#d9262a" stroke-width="1.4"/><path d="M11 10.3 L14 12 L11 13.7Z" fill="#d9262a"/></g>
<text x="85.5" y="274.5" font-size="12.4" fill="#1a1a1a" textLength="77.50" lengthAdjust="spacingAndGlyphs" >Drawing View2</text>
<rect x="362" y="145" width="267" height="23" fill="#fbfbfb" />
<path d="M362.5 168 V145.5 H629.5 V168" fill="none" stroke="#c9cbce"/>
<line x1="629.5" y1="167.5" x2="1679" y2="167.5" stroke="#c4c6ca" stroke-width="1" />
<path d="M376 156.5 H385 M380.5 152 V161" stroke="#6b5a2e" stroke-width="1.6"/>
<text x="393.5" y="161" font-size="12" fill="#1e1e1e" textLength="205.50" lengthAdjust="spacingAndGlyphs" >CENTER GRINDER 03.Z3 - [FLANGE_2D]</text>
<path d="M607 152.5 L615 160.5 M615 152.5 L607 160.5" stroke="#8a6d3a" stroke-width="1.6"/>
<path d="M638 156.5 H648 M643 151.5 V161.5" stroke="#a8aaad" stroke-width="1.6"/>
<path d="M1661 153 H1670 L1665.5 157 Z M1661 157.5 H1670 L1665.5 161.5 Z" fill="#8a8d92"/>
<defs><linearGradient id="vp" x1="0" y1="0" x2="0" y2="1"><stop offset="0" stop-color="#fcfcfc"/><stop offset=".06" stop-color="#f8f8f8"/><stop offset="1" stop-color="#9f9f9f"/></linearGradient></defs>
<rect x="360" y="168" width="1318" height="790" fill="url(#vp)" />
<line x1="1679.5" y1="168" x2="1679.5" y2="1010" stroke="#c9cbce" stroke-width="1" />
<rect x="1528" y="215" width="10" height="718" fill="#000" />
<rect x="522" y="923" width="1016" height="10" fill="#000" />
<rect x="511" y="204" width="1017" height="719" fill="#eeeced" />
<rect x="511.5" y="204.5" width="1016" height="718" fill="none" stroke="#111"/>
<path d="M528 905h1v1h-1zM545 905h1v1h-1zM562 905h1v1h-1zM579 905h1v1h-1zM596 905h1v1h-1zM614 905h1v1h-1zM631 905h1v1h-1zM648 905h1v1h-1zM665 905h1v1h-1zM682 905h1v1h-1zM699 905h1v1h-1zM716 905h1v1h-1zM733 905h1v1h-1zM750 905h1v1h-1zM768 905h1v1h-1zM785 905h1v1h-1zM802 905h1v1h-1zM819 905h1v1h-1zM836 905h1v1h-1zM853 905h1v1h-1zM870 905h1v1h-1zM887 905h1v1h-1zM904 905h1v1h-1zM921 905h1v1h-1zM938 905h1v1h-1zM956 905h1v1h-1zM973 905h1v1h-1zM990 905h1v1h-1zM1007 905h1v1h-1zM1024 905h1v1h-1zM1041 905h1v1h-1zM1058 905h1v1h-1zM1075 905h1v1h-1zM1092 905h1v1h-1zM1110 905h1v1h-1zM1127 905h1v1h-1zM1144 905h1v1h-1zM1161 905h1v1h-1zM1178 905h1v1h-1zM1195 905h1v1h-1zM1212 905h1v1h-1zM1229 905h1v1h-1zM1246 905h1v1h-1zM1263 905h1v1h-1zM1280 905h1v1h-1zM1298 905h1v1h-1zM1315 905h1v1h-1zM1332 905h1v1h-1zM1349 905h1v1h-1zM1366 905h1v1h-1zM1383 905h1v1h-1zM1400 905h1v1h-1zM1417 905h1v1h-1zM1434 905h1v1h-1zM1452 905h1v1h-1zM1469 905h1v1h-1zM1486 905h1v1h-1zM1503 905h1v1h-1zM1520 905h1v1h-1zM528 888h1v1h-1zM545 888h1v1h-1zM562 888h1v1h-1zM579 888h1v1h-1zM596 888h1v1h-1zM614 888h1v1h-1zM631 888h1v1h-1zM648 888h1v1h-1zM665 888h1v1h-1zM682 888h1v1h-1zM699 888h1v1h-1zM716 888h1v1h-1zM733 888h1v1h-1zM750 888h1v1h-1zM768 888h1v1h-1zM785 888h1v1h-1zM802 888h1v1h-1zM819 888h1v1h-1zM836 888h1v1h-1zM853 888h1v1h-1zM870 888h1v1h-1zM887 888h1v1h-1zM904 888h1v1h-1zM921 888h1v1h-1zM938 888h1v1h-1zM956 888h1v1h-1zM973 888h1v1h-1zM990 888h1v1h-1zM1007 888h1v1h-1zM1024 888h1v1h-1zM1041 888h1v1h-1zM1058 888h1v1h-1zM1075 888h1v1h-1zM1092 888h1v1h-1zM1110 888h1v1h-1zM1127 888h1v1h-1zM1144 888h1v1h-1zM1161 888h1v1h-1zM1178 888h1v1h-1zM1195 888h1v1h-1zM1212 888h1v1h-1zM1229 888h1v1h-1zM1246 888h1v1h-1zM1263 888h1v1h-1zM1280 888h1v1h-1zM1298 888h1v1h-1zM1315 888h1v1h-1zM1332 888h1v1h-1zM1349 888h1v1h-1zM1366 888h1v1h-1zM1383 888h1v1h-1zM1400 888h1v1h-1zM1417 888h1v1h-1zM1434 888h1v1h-1zM1452 888h1v1h-1zM1469 888h1v1h-1zM1486 888h1v1h-1zM1503 888h1v1h-1zM1520 888h1v1h-1zM528 871h1v1h-1zM545 871h1v1h-1zM562 871h1v1h-1zM579 871h1v1h-1zM596 871h1v1h-1zM614 871h1v1h-1zM631 871h1v1h-1zM648 871h1v1h-1zM665 871h1v1h-1zM682 871h1v1h-1zM699 871h1v1h-1zM716 871h1v1h-1zM733 871h1v1h-1zM750 871h1v1h-1zM768 871h1v1h-1zM785 871h1v1h-1zM802 871h1v1h-1zM819 871h1v1h-1zM836 871h1v1h-1zM853 871h1v1h-1zM870 871h1v1h-1zM887 871h1v1h-1zM904 871h1v1h-1zM921 871h1v1h-1zM938 871h1v1h-1zM956 871h1v1h-1zM973 871h1v1h-1zM990 871h1v1h-1zM1007 871h1v1h-1zM1024 871h1v1h-1zM1041 871h1v1h-1zM1058 871h1v1h-1zM1075 871h1v1h-1zM1092 871h1v1h-1zM1110 871h1v1h-1zM1127 871h1v1h-1zM1144 871h1v1h-1zM1161 871h1v1h-1zM1178 871h1v1h-1zM1195 871h1v1h-1zM1212 871h1v1h-1zM1229 871h1v1h-1zM1246 871h1v1h-1zM1263 871h1v1h-1zM1280 871h1v1h-1zM1298 871h1v1h-1zM1315 871h1v1h-1zM1332 871h1v1h-1zM1349 871h1v1h-1zM1366 871h1v1h-1zM1383 871h1v1h-1zM1400 871h1v1h-1zM1417 871h1v1h-1zM1434 871h1v1h-1zM1452 871h1v1h-1zM1469 871h1v1h-1zM1486 871h1v1h-1zM1503 871h1v1h-1zM1520 871h1v1h-1zM528 854h1v1h-1zM545 854h1v1h-1zM562 854h1v1h-1zM579 854h1v1h-1zM596 854h1v1h-1zM614 854h1v1h-1zM631 854h1v1h-1zM648 854h1v1h-1zM665 854h1v1h-1zM682 854h1v1h-1zM699 854h1v1h-1zM716 854h1v1h-1zM733 854h1v1h-1zM750 854h1v1h-1zM768 854h1v1h-1zM785 854h1v1h-1zM802 854h1v1h-1zM819 854h1v1h-1zM836 854h1v1h-1zM853 854h1v1h-1zM870 854h1v1h-1zM887 854h1v1h-1zM904 854h1v1h-1zM921 854h1v1h-1zM938 854h1v1h-1zM956 854h1v1h-1zM973 854h1v1h-1zM990 854h1v1h-1zM1007 854h1v1h-1zM1024 854h1v1h-1zM1041 854h1v1h-1zM1058 854h1v1h-1zM1075 854h1v1h-1zM1092 854h1v1h-1zM1110 854h1v1h-1zM1127 854h1v1h-1zM1144 854h1v1h-1zM1161 854h1v1h-1zM1178 854h1v1h-1zM1195 854h1v1h-1zM1212 854h1v1h-1zM1229 854h1v1h-1zM1246 854h1v1h-1zM1263 854h1v1h-1zM1280 854h1v1h-1zM1298 854h1v1h-1zM1315 854h1v1h-1zM1332 854h1v1h-1zM1349 854h1v1h-1zM1366 854h1v1h-1zM1383 854h1v1h-1zM1400 854h1v1h-1zM1417 854h1v1h-1zM1434 854h1v1h-1zM1452 854h1v1h-1zM1469 854h1v1h-1zM1486 854h1v1h-1zM1503 854h1v1h-1zM1520 854h1v1h-1zM528 836h1v1h-1zM545 836h1v1h-1zM562 836h1v1h-1zM579 836h1v1h-1zM596 836h1v1h-1zM614 836h1v1h-1zM631 836h1v1h-1zM648 836h1v1h-1zM665 836h1v1h-1zM682 836h1v1h-1zM699 836h1v1h-1zM716 836h1v1h-1zM733 836h1v1h-1zM750 836h1v1h-1zM768 836h1v1h-1zM785 836h1v1h-1zM802 836h1v1h-1zM819 836h1v1h-1zM836 836h1v1h-1zM853 836h1v1h-1zM870 836h1v1h-1zM887 836h1v1h-1zM904 836h1v1h-1zM921 836h1v1h-1zM938 836h1v1h-1zM956 836h1v1h-1zM973 836h1v1h-1zM990 836h1v1h-1zM1007 836h1v1h-1zM1024 836h1v1h-1zM1041 836h1v1h-1zM1058 836h1v1h-1zM1075 836h1v1h-1zM1092 836h1v1h-1zM1110 836h1v1h-1zM1127 836h1v1h-1zM1144 836h1v1h-1zM1161 836h1v1h-1zM1178 836h1v1h-1zM1195 836h1v1h-1zM1212 836h1v1h-1zM1229 836h1v1h-1zM1246 836h1v1h-1zM1263 836h1v1h-1zM1280 836h1v1h-1zM1298 836h1v1h-1zM1315 836h1v1h-1zM1332 836h1v1h-1zM1349 836h1v1h-1zM1366 836h1v1h-1zM1383 836h1v1h-1zM1400 836h1v1h-1zM1417 836h1v1h-1zM1434 836h1v1h-1zM1452 836h1v1h-1zM1469 836h1v1h-1zM1486 836h1v1h-1zM1503 836h1v1h-1zM1520 836h1v1h-1zM528 819h1v1h-1zM545 819h1v1h-1zM562 819h1v1h-1zM579 819h1v1h-1zM596 819h1v1h-1zM614 819h1v1h-1zM631 819h1v1h-1zM648 819h1v1h-1zM665 819h1v1h-1zM682 819h1v1h-1zM699 819h1v1h-1zM716 819h1v1h-1zM733 819h1v1h-1zM750 819h1v1h-1zM768 819h1v1h-1zM785 819h1v1h-1zM802 819h1v1h-1zM819 819h1v1h-1zM836 819h1v1h-1zM853 819h1v1h-1zM870 819h1v1h-1zM887 819h1v1h-1zM904 819h1v1h-1zM921 819h1v1h-1zM938 819h1v1h-1zM956 819h1v1h-1zM973 819h1v1h-1zM990 819h1v1h-1zM1007 819h1v1h-1zM1024 819h1v1h-1zM1041 819h1v1h-1zM1058 819h1v1h-1zM1075 819h1v1h-1zM1092 819h1v1h-1zM1110 819h1v1h-1zM1127 819h1v1h-1zM1144 819h1v1h-1zM1161 819h1v1h-1zM1178 819h1v1h-1zM1195 819h1v1h-1zM1212 819h1v1h-1zM1229 819h1v1h-1zM1246 819h1v1h-1zM1263 819h1v1h-1zM1280 819h1v1h-1zM1298 819h1v1h-1zM1315 819h1v1h-1zM1332 819h1v1h-1zM1349 819h1v1h-1zM1366 819h1v1h-1zM1383 819h1v1h-1zM1400 819h1v1h-1zM1417 819h1v1h-1zM1434 819h1v1h-1zM1452 819h1v1h-1zM1469 819h1v1h-1zM1486 819h1v1h-1zM1503 819h1v1h-1zM1520 819h1v1h-1zM528 802h1v1h-1zM545 802h1v1h-1zM562 802h1v1h-1zM579 802h1v1h-1zM596 802h1v1h-1zM614 802h1v1h-1zM631 802h1v1h-1zM648 802h1v1h-1zM665 802h1v1h-1zM682 802h1v1h-1zM699 802h1v1h-1zM716 802h1v1h-1zM733 802h1v1h-1zM750 802h1v1h-1zM768 802h1v1h-1zM785 802h1v1h-1zM802 802h1v1h-1zM819 802h1v1h-1zM836 802h1v1h-1zM853 802h1v1h-1zM870 802h1v1h-1zM887 802h1v1h-1zM904 802h1v1h-1zM921 802h1v1h-1zM938 802h1v1h-1zM956 802h1v1h-1zM973 802h1v1h-1zM990 802h1v1h-1zM1007 802h1v1h-1zM1024 802h1v1h-1zM1041 802h1v1h-1zM1058 802h1v1h-1zM1075 802h1v1h-1zM1092 802h1v1h-1zM1110 802h1v1h-1zM1127 802h1v1h-1zM1144 802h1v1h-1zM1161 802h1v1h-1zM1178 802h1v1h-1zM1195 802h1v1h-1zM1212 802h1v1h-1zM1229 802h1v1h-1zM1246 802h1v1h-1zM1263 802h1v1h-1zM1280 802h1v1h-1zM1298 802h1v1h-1zM1315 802h1v1h-1zM1332 802h1v1h-1zM1349 802h1v1h-1zM1366 802h1v1h-1zM1383 802h1v1h-1zM1400 802h1v1h-1zM1417 802h1v1h-1zM1434 802h1v1h-1zM1452 802h1v1h-1zM1469 802h1v1h-1zM1486 802h1v1h-1zM1503 802h1v1h-1zM1520 802h1v1h-1zM528 785h1v1h-1zM545 785h1v1h-1zM562 785h1v1h-1zM579 785h1v1h-1zM596 785h1v1h-1zM614 785h1v1h-1zM631 785h1v1h-1zM648 785h1v1h-1zM665 785h1v1h-1zM682 785h1v1h-1zM699 785h1v1h-1zM716 785h1v1h-1zM733 785h1v1h-1zM750 785h1v1h-1zM768 785h1v1h-1zM785 785h1v1h-1zM802 785h1v1h-1zM819 785h1v1h-1zM836 785h1v1h-1zM853 785h1v1h-1zM870 785h1v1h-1zM887 785h1v1h-1zM904 785h1v1h-1zM921 785h1v1h-1zM938 785h1v1h-1zM956 785h1v1h-1zM973 785h1v1h-1zM990 785h1v1h-1zM1007 785h1v1h-1zM1024 785h1v1h-1zM1041 785h1v1h-1zM1058 785h1v1h-1zM1075 785h1v1h-1zM1092 785h1v1h-1zM1110 785h1v1h-1zM1127 785h1v1h-1zM1144 785h1v1h-1zM1161 785h1v1h-1zM1178 785h1v1h-1zM1195 785h1v1h-1zM1212 785h1v1h-1zM1229 785h1v1h-1zM1246 785h1v1h-1zM1263 785h1v1h-1zM1280 785h1v1h-1zM1298 785h1v1h-1zM1315 785h1v1h-1zM1332 785h1v1h-1zM1349 785h1v1h-1zM1366 785h1v1h-1zM1383 785h1v1h-1zM1400 785h1v1h-1zM1417 785h1v1h-1zM1434 785h1v1h-1zM1452 785h1v1h-1zM1469 785h1v1h-1zM1486 785h1v1h-1zM1503 785h1v1h-1zM1520 785h1v1h-1zM528 768h1v1h-1zM545 768h1v1h-1zM562 768h1v1h-1zM579 768h1v1h-1zM596 768h1v1h-1zM614 768h1v1h-1zM631 768h1v1h-1zM648 768h1v1h-1zM665 768h1v1h-1zM682 768h1v1h-1zM699 768h1v1h-1zM716 768h1v1h-1zM733 768h1v1h-1zM750 768h1v1h-1zM768 768h1v1h-1zM785 768h1v1h-1zM802 768h1v1h-1zM819 768h1v1h-1zM836 768h1v1h-1zM853 768h1v1h-1zM870 768h1v1h-1zM887 768h1v1h-1zM904 768h1v1h-1zM921 768h1v1h-1zM938 768h1v1h-1zM956 768h1v1h-1zM973 768h1v1h-1zM990 768h1v1h-1zM1007 768h1v1h-1zM1024 768h1v1h-1zM1041 768h1v1h-1zM1058 768h1v1h-1zM1075 768h1v1h-1zM1092 768h1v1h-1zM1110 768h1v1h-1zM1127 768h1v1h-1zM1144 768h1v1h-1zM1161 768h1v1h-1zM1178 768h1v1h-1zM1195 768h1v1h-1zM1212 768h1v1h-1zM1229 768h1v1h-1zM1246 768h1v1h-1zM1263 768h1v1h-1zM1280 768h1v1h-1zM1298 768h1v1h-1zM1315 768h1v1h-1zM1332 768h1v1h-1zM1349 768h1v1h-1zM1366 768h1v1h-1zM1383 768h1v1h-1zM1400 768h1v1h-1zM1417 768h1v1h-1zM1434 768h1v1h-1zM1452 768h1v1h-1zM1469 768h1v1h-1zM1486 768h1v1h-1zM1503 768h1v1h-1zM1520 768h1v1h-1zM528 751h1v1h-1zM545 751h1v1h-1zM562 751h1v1h-1zM579 751h1v1h-1zM596 751h1v1h-1zM614 751h1v1h-1zM631 751h1v1h-1zM648 751h1v1h-1zM665 751h1v1h-1zM682 751h1v1h-1zM699 751h1v1h-1zM716 751h1v1h-1zM733 751h1v1h-1zM750 751h1v1h-1zM768 751h1v1h-1zM785 751h1v1h-1zM802 751h1v1h-1zM819 751h1v1h-1zM836 751h1v1h-1zM853 751h1v1h-1zM870 751h1v1h-1zM887 751h1v1h-1zM904 751h1v1h-1zM921 751h1v1h-1zM938 751h1v1h-1zM956 751h1v1h-1zM973 751h1v1h-1zM990 751h1v1h-1zM1007 751h1v1h-1zM1024 751h1v1h-1zM1041 751h1v1h-1zM1058 751h1v1h-1zM1075 751h1v1h-1zM1092 751h1v1h-1zM1110 751h1v1h-1zM1127 751h1v1h-1zM1144 751h1v1h-1zM1161 751h1v1h-1zM1178 751h1v1h-1zM1195 751h1v1h-1zM1212 751h1v1h-1zM1229 751h1v1h-1zM1246 751h1v1h-1zM1263 751h1v1h-1zM1280 751h1v1h-1zM1298 751h1v1h-1zM1315 751h1v1h-1zM1332 751h1v1h-1zM1349 751h1v1h-1zM1366 751h1v1h-1zM1383 751h1v1h-1zM1400 751h1v1h-1zM1417 751h1v1h-1zM1434 751h1v1h-1zM1452 751h1v1h-1zM1469 751h1v1h-1zM1486 751h1v1h-1zM1503 751h1v1h-1zM1520 751h1v1h-1zM528 734h1v1h-1zM545 734h1v1h-1zM562 734h1v1h-1zM579 734h1v1h-1zM596 734h1v1h-1zM614 734h1v1h-1zM631 734h1v1h-1zM648 734h1v1h-1zM665 734h1v1h-1zM682 734h1v1h-1zM699 734h1v1h-1zM716 734h1v1h-1zM733 734h1v1h-1zM750 734h1v1h-1zM768 734h1v1h-1zM785 734h1v1h-1zM802 734h1v1h-1zM819 734h1v1h-1zM836 734h1v1h-1zM853 734h1v1h-1zM870 734h1v1h-1zM887 734h1v1h-1zM904 734h1v1h-1zM921 734h1v1h-1zM938 734h1v1h-1zM956 734h1v1h-1zM973 734h1v1h-1zM990 734h1v1h-1zM1007 734h1v1h-1zM1024 734h1v1h-1zM1041 734h1v1h-1zM1058 734h1v1h-1zM1075 734h1v1h-1zM1092 734h1v1h-1zM1110 734h1v1h-1zM1127 734h1v1h-1zM1144 734h1v1h-1zM1161 734h1v1h-1zM1178 734h1v1h-1zM1195 734h1v1h-1zM1212 734h1v1h-1zM1229 734h1v1h-1zM1246 734h1v1h-1zM1263 734h1v1h-1zM1280 734h1v1h-1zM1298 734h1v1h-1zM1315 734h1v1h-1zM1332 734h1v1h-1zM1349 734h1v1h-1zM1366 734h1v1h-1zM1383 734h1v1h-1zM1400 734h1v1h-1zM1417 734h1v1h-1zM1434 734h1v1h-1zM1452 734h1v1h-1zM1469 734h1v1h-1zM1486 734h1v1h-1zM1503 734h1v1h-1zM1520 734h1v1h-1zM528 717h1v1h-1zM545 717h1v1h-1zM562 717h1v1h-1zM579 717h1v1h-1zM596 717h1v1h-1zM614 717h1v1h-1zM631 717h1v1h-1zM648 717h1v1h-1zM665 717h1v1h-1zM682 717h1v1h-1zM699 717h1v1h-1zM716 717h1v1h-1zM733 717h1v1h-1zM750 717h1v1h-1zM768 717h1v1h-1zM785 717h1v1h-1zM802 717h1v1h-1zM819 717h1v1h-1zM836 717h1v1h-1zM853 717h1v1h-1zM870 717h1v1h-1zM887 717h1v1h-1zM904 717h1v1h-1zM921 717h1v1h-1zM938 717h1v1h-1zM956 717h1v1h-1zM973 717h1v1h-1zM990 717h1v1h-1zM1007 717h1v1h-1zM1024 717h1v1h-1zM1041 717h1v1h-1zM1058 717h1v1h-1zM1075 717h1v1h-1zM1092 717h1v1h-1zM1110 717h1v1h-1zM1127 717h1v1h-1zM1144 717h1v1h-1zM1161 717h1v1h-1zM1178 717h1v1h-1zM1195 717h1v1h-1zM1212 717h1v1h-1zM1229 717h1v1h-1zM1246 717h1v1h-1zM1263 717h1v1h-1zM1280 717h1v1h-1zM1298 717h1v1h-1zM1315 717h1v1h-1zM1332 717h1v1h-1zM1349 717h1v1h-1zM1366 717h1v1h-1zM1383 717h1v1h-1zM1400 717h1v1h-1zM1417 717h1v1h-1zM1434 717h1v1h-1zM1452 717h1v1h-1zM1469 717h1v1h-1zM1486 717h1v1h-1zM1503 717h1v1h-1zM1520 717h1v1h-1zM528 700h1v1h-1zM545 700h1v1h-1zM562 700h1v1h-1zM579 700h1v1h-1zM596 700h1v1h-1zM614 700h1v1h-1zM631 700h1v1h-1zM648 700h1v1h-1zM665 700h1v1h-1zM682 700h1v1h-1zM699 700h1v1h-1zM716 700h1v1h-1zM733 700h1v1h-1zM750 700h1v1h-1zM768 700h1v1h-1zM785 700h1v1h-1zM802 700h1v1h-1zM819 700h1v1h-1zM836 700h1v1h-1zM853 700h1v1h-1zM870 700h1v1h-1zM887 700h1v1h-1zM904 700h1v1h-1zM921 700h1v1h-1zM938 700h1v1h-1zM956 700h1v1h-1zM973 700h1v1h-1zM990 700h1v1h-1zM1007 700h1v1h-1zM1024 700h1v1h-1zM1041 700h1v1h-1zM1058 700h1v1h-1zM1075 700h1v1h-1zM1092 700h1v1h-1zM1110 700h1v1h-1zM1127 700h1v1h-1zM1144 700h1v1h-1zM1161 700h1v1h-1zM1178 700h1v1h-1zM1195 700h1v1h-1zM1212 700h1v1h-1zM1229 700h1v1h-1zM1246 700h1v1h-1zM1263 700h1v1h-1zM1280 700h1v1h-1zM1298 700h1v1h-1zM1315 700h1v1h-1zM1332 700h1v1h-1zM1349 700h1v1h-1zM1366 700h1v1h-1zM1383 700h1v1h-1zM1400 700h1v1h-1zM1417 700h1v1h-1zM1434 700h1v1h-1zM1452 700h1v1h-1zM1469 700h1v1h-1zM1486 700h1v1h-1zM1503 700h1v1h-1zM1520 700h1v1h-1zM528 683h1v1h-1zM545 683h1v1h-1zM562 683h1v1h-1zM579 683h1v1h-1zM596 683h1v1h-1zM614 683h1v1h-1zM631 683h1v1h-1zM648 683h1v1h-1zM665 683h1v1h-1zM682 683h1v1h-1zM699 683h1v1h-1zM716 683h1v1h-1zM733 683h1v1h-1zM750 683h1v1h-1zM768 683h1v1h-1zM785 683h1v1h-1zM802 683h1v1h-1zM819 683h1v1h-1zM836 683h1v1h-1zM853 683h1v1h-1zM870 683h1v1h-1zM887 683h1v1h-1zM904 683h1v1h-1zM921 683h1v1h-1zM938 683h1v1h-1zM956 683h1v1h-1zM973 683h1v1h-1zM990 683h1v1h-1zM1007 683h1v1h-1zM1024 683h1v1h-1zM1041 683h1v1h-1zM1058 683h1v1h-1zM1075 683h1v1h-1zM1092 683h1v1h-1zM1110 683h1v1h-1zM1127 683h1v1h-1zM1144 683h1v1h-1zM1161 683h1v1h-1zM1178 683h1v1h-1zM1195 683h1v1h-1zM1212 683h1v1h-1zM1229 683h1v1h-1zM1246 683h1v1h-1zM1263 683h1v1h-1zM1280 683h1v1h-1zM1298 683h1v1h-1zM1315 683h1v1h-1zM1332 683h1v1h-1zM1349 683h1v1h-1zM1366 683h1v1h-1zM1383 683h1v1h-1zM1400 683h1v1h-1zM1417 683h1v1h-1zM1434 683h1v1h-1zM1452 683h1v1h-1zM1469 683h1v1h-1zM1486 683h1v1h-1zM1503 683h1v1h-1zM1520 683h1v1h-1zM528 666h1v1h-1zM545 666h1v1h-1zM562 666h1v1h-1zM579 666h1v1h-1zM596 666h1v1h-1zM614 666h1v1h-1zM631 666h1v1h-1zM648 666h1v1h-1zM665 666h1v1h-1zM682 666h1v1h-1zM699 666h1v1h-1zM716 666h1v1h-1zM733 666h1v1h-1zM750 666h1v1h-1zM768 666h1v1h-1zM785 666h1v1h-1zM802 666h1v1h-1zM819 666h1v1h-1zM836 666h1v1h-1zM853 666h1v1h-1zM870 666h1v1h-1zM887 666h1v1h-1zM904 666h1v1h-1zM921 666h1v1h-1zM938 666h1v1h-1zM956 666h1v1h-1zM973 666h1v1h-1zM990 666h1v1h-1zM1007 666h1v1h-1zM1024 666h1v1h-1zM1041 666h1v1h-1zM1058 666h1v1h-1zM1075 666h1v1h-1zM1092 666h1v1h-1zM1110 666h1v1h-1zM1127 666h1v1h-1zM1144 666h1v1h-1zM1161 666h1v1h-1zM1178 666h1v1h-1zM1195 666h1v1h-1zM1212 666h1v1h-1zM1229 666h1v1h-1zM1246 666h1v1h-1zM1263 666h1v1h-1zM1280 666h1v1h-1zM1298 666h1v1h-1zM1315 666h1v1h-1zM1332 666h1v1h-1zM1349 666h1v1h-1zM1366 666h1v1h-1zM1383 666h1v1h-1zM1400 666h1v1h-1zM1417 666h1v1h-1zM1434 666h1v1h-1zM1452 666h1v1h-1zM1469 666h1v1h-1zM1486 666h1v1h-1zM1503 666h1v1h-1zM1520 666h1v1h-1zM528 648h1v1h-1zM545 648h1v1h-1zM562 648h1v1h-1zM579 648h1v1h-1zM596 648h1v1h-1zM614 648h1v1h-1zM631 648h1v1h-1zM648 648h1v1h-1zM665 648h1v1h-1zM682 648h1v1h-1zM699 648h1v1h-1zM716 648h1v1h-1zM733 648h1v1h-1zM750 648h1v1h-1zM768 648h1v1h-1zM785 648h1v1h-1zM802 648h1v1h-1zM819 648h1v1h-1zM836 648h1v1h-1zM853 648h1v1h-1zM870 648h1v1h-1zM887 648h1v1h-1zM904 648h1v1h-1zM921 648h1v1h-1zM938 648h1v1h-1zM956 648h1v1h-1zM973 648h1v1h-1zM990 648h1v1h-1zM1007 648h1v1h-1zM1024 648h1v1h-1zM1041 648h1v1h-1zM1058 648h1v1h-1zM1075 648h1v1h-1zM1092 648h1v1h-1zM1110 648h1v1h-1zM1127 648h1v1h-1zM1144 648h1v1h-1zM1161 648h1v1h-1zM1178 648h1v1h-1zM1195 648h1v1h-1zM1212 648h1v1h-1zM1229 648h1v1h-1zM1246 648h1v1h-1zM1263 648h1v1h-1zM1280 648h1v1h-1zM1298 648h1v1h-1zM1315 648h1v1h-1zM1332 648h1v1h-1zM1349 648h1v1h-1zM1366 648h1v1h-1zM1383 648h1v1h-1zM1400 648h1v1h-1zM1417 648h1v1h-1zM1434 648h1v1h-1zM1452 648h1v1h-1zM1469 648h1v1h-1zM1486 648h1v1h-1zM1503 648h1v1h-1zM1520 648h1v1h-1zM528 631h1v1h-1zM545 631h1v1h-1zM562 631h1v1h-1zM579 631h1v1h-1zM596 631h1v1h-1zM614 631h1v1h-1zM631 631h1v1h-1zM648 631h1v1h-1zM665 631h1v1h-1zM682 631h1v1h-1zM699 631h1v1h-1zM716 631h1v1h-1zM733 631h1v1h-1zM750 631h1v1h-1zM768 631h1v1h-1zM785 631h1v1h-1zM802 631h1v1h-1zM819 631h1v1h-1zM836 631h1v1h-1zM853 631h1v1h-1zM870 631h1v1h-1zM887 631h1v1h-1zM904 631h1v1h-1zM921 631h1v1h-1zM938 631h1v1h-1zM956 631h1v1h-1zM973 631h1v1h-1zM990 631h1v1h-1zM1007 631h1v1h-1zM1024 631h1v1h-1zM1041 631h1v1h-1zM1058 631h1v1h-1zM1075 631h1v1h-1zM1092 631h1v1h-1zM1110 631h1v1h-1zM1127 631h1v1h-1zM1144 631h1v1h-1zM1161 631h1v1h-1zM1178 631h1v1h-1zM1195 631h1v1h-1zM1212 631h1v1h-1zM1229 631h1v1h-1zM1246 631h1v1h-1zM1263 631h1v1h-1zM1280 631h1v1h-1zM1298 631h1v1h-1zM1315 631h1v1h-1zM1332 631h1v1h-1zM1349 631h1v1h-1zM1366 631h1v1h-1zM1383 631h1v1h-1zM1400 631h1v1h-1zM1417 631h1v1h-1zM1434 631h1v1h-1zM1452 631h1v1h-1zM1469 631h1v1h-1zM1486 631h1v1h-1zM1503 631h1v1h-1zM1520 631h1v1h-1zM528 614h1v1h-1zM545 614h1v1h-1zM562 614h1v1h-1zM579 614h1v1h-1zM596 614h1v1h-1zM614 614h1v1h-1zM631 614h1v1h-1zM648 614h1v1h-1zM665 614h1v1h-1zM682 614h1v1h-1zM699 614h1v1h-1zM716 614h1v1h-1zM733 614h1v1h-1zM750 614h1v1h-1zM768 614h1v1h-1zM785 614h1v1h-1zM802 614h1v1h-1zM819 614h1v1h-1zM836 614h1v1h-1zM853 614h1v1h-1zM870 614h1v1h-1zM887 614h1v1h-1zM904 614h1v1h-1zM921 614h1v1h-1zM938 614h1v1h-1zM956 614h1v1h-1zM973 614h1v1h-1zM990 614h1v1h-1zM1007 614h1v1h-1zM1024 614h1v1h-1zM1041 614h1v1h-1zM1058 614h1v1h-1zM1075 614h1v1h-1zM1092 614h1v1h-1zM1110 614h1v1h-1zM1127 614h1v1h-1zM1144 614h1v1h-1zM1161 614h1v1h-1zM1178 614h1v1h-1zM1195 614h1v1h-1zM1212 614h1v1h-1zM1229 614h1v1h-1zM1246 614h1v1h-1zM1263 614h1v1h-1zM1280 614h1v1h-1zM1298 614h1v1h-1zM1315 614h1v1h-1zM1332 614h1v1h-1zM1349 614h1v1h-1zM1366 614h1v1h-1zM1383 614h1v1h-1zM1400 614h1v1h-1zM1417 614h1v1h-1zM1434 614h1v1h-1zM1452 614h1v1h-1zM1469 614h1v1h-1zM1486 614h1v1h-1zM1503 614h1v1h-1zM1520 614h1v1h-1zM528 597h1v1h-1zM545 597h1v1h-1zM562 597h1v1h-1zM579 597h1v1h-1zM596 597h1v1h-1zM614 597h1v1h-1zM631 597h1v1h-1zM648 597h1v1h-1zM665 597h1v1h-1zM682 597h1v1h-1zM699 597h1v1h-1zM716 597h1v1h-1zM733 597h1v1h-1zM750 597h1v1h-1zM768 597h1v1h-1zM785 597h1v1h-1zM802 597h1v1h-1zM819 597h1v1h-1zM836 597h1v1h-1zM853 597h1v1h-1zM870 597h1v1h-1zM887 597h1v1h-1zM904 597h1v1h-1zM921 597h1v1h-1zM938 597h1v1h-1zM956 597h1v1h-1zM973 597h1v1h-1zM990 597h1v1h-1zM1007 597h1v1h-1zM1024 597h1v1h-1zM1041 597h1v1h-1zM1058 597h1v1h-1zM1075 597h1v1h-1zM1092 597h1v1h-1zM1110 597h1v1h-1zM1127 597h1v1h-1zM1144 597h1v1h-1zM1161 597h1v1h-1zM1178 597h1v1h-1zM1195 597h1v1h-1zM1212 597h1v1h-1zM1229 597h1v1h-1zM1246 597h1v1h-1zM1263 597h1v1h-1zM1280 597h1v1h-1zM1298 597h1v1h-1zM1315 597h1v1h-1zM1332 597h1v1h-1zM1349 597h1v1h-1zM1366 597h1v1h-1zM1383 597h1v1h-1zM1400 597h1v1h-1zM1417 597h1v1h-1zM1434 597h1v1h-1zM1452 597h1v1h-1zM1469 597h1v1h-1zM1486 597h1v1h-1zM1503 597h1v1h-1zM1520 597h1v1h-1zM528 580h1v1h-1zM545 580h1v1h-1zM562 580h1v1h-1zM579 580h1v1h-1zM596 580h1v1h-1zM614 580h1v1h-1zM631 580h1v1h-1zM648 580h1v1h-1zM665 580h1v1h-1zM682 580h1v1h-1zM699 580h1v1h-1zM716 580h1v1h-1zM733 580h1v1h-1zM750 580h1v1h-1zM768 580h1v1h-1zM785 580h1v1h-1zM802 580h1v1h-1zM819 580h1v1h-1zM836 580h1v1h-1zM853 580h1v1h-1zM870 580h1v1h-1zM887 580h1v1h-1zM904 580h1v1h-1zM921 580h1v1h-1zM938 580h1v1h-1zM956 580h1v1h-1zM973 580h1v1h-1zM990 580h1v1h-1zM1007 580h1v1h-1zM1024 580h1v1h-1zM1041 580h1v1h-1zM1058 580h1v1h-1zM1075 580h1v1h-1zM1092 580h1v1h-1zM1110 580h1v1h-1zM1127 580h1v1h-1zM1144 580h1v1h-1zM1161 580h1v1h-1zM1178 580h1v1h-1zM1195 580h1v1h-1zM1212 580h1v1h-1zM1229 580h1v1h-1zM1246 580h1v1h-1zM1263 580h1v1h-1zM1280 580h1v1h-1zM1298 580h1v1h-1zM1315 580h1v1h-1zM1332 580h1v1h-1zM1349 580h1v1h-1zM1366 580h1v1h-1zM1383 580h1v1h-1zM1400 580h1v1h-1zM1417 580h1v1h-1zM1434 580h1v1h-1zM1452 580h1v1h-1zM1469 580h1v1h-1zM1486 580h1v1h-1zM1503 580h1v1h-1zM1520 580h1v1h-1zM528 563h1v1h-1zM545 563h1v1h-1zM562 563h1v1h-1zM579 563h1v1h-1zM596 563h1v1h-1zM614 563h1v1h-1zM631 563h1v1h-1zM648 563h1v1h-1zM665 563h1v1h-1zM682 563h1v1h-1zM699 563h1v1h-1zM716 563h1v1h-1zM733 563h1v1h-1zM750 563h1v1h-1zM768 563h1v1h-1zM785 563h1v1h-1zM802 563h1v1h-1zM819 563h1v1h-1zM836 563h1v1h-1zM853 563h1v1h-1zM870 563h1v1h-1zM887 563h1v1h-1zM904 563h1v1h-1zM921 563h1v1h-1zM938 563h1v1h-1zM956 563h1v1h-1zM973 563h1v1h-1zM990 563h1v1h-1zM1007 563h1v1h-1zM1024 563h1v1h-1zM1041 563h1v1h-1zM1058 563h1v1h-1zM1075 563h1v1h-1zM1092 563h1v1h-1zM1110 563h1v1h-1zM1127 563h1v1h-1zM1144 563h1v1h-1zM1161 563h1v1h-1zM1178 563h1v1h-1zM1195 563h1v1h-1zM1212 563h1v1h-1zM1229 563h1v1h-1zM1246 563h1v1h-1zM1263 563h1v1h-1zM1280 563h1v1h-1zM1298 563h1v1h-1zM1315 563h1v1h-1zM1332 563h1v1h-1zM1349 563h1v1h-1zM1366 563h1v1h-1zM1383 563h1v1h-1zM1400 563h1v1h-1zM1417 563h1v1h-1zM1434 563h1v1h-1zM1452 563h1v1h-1zM1469 563h1v1h-1zM1486 563h1v1h-1zM1503 563h1v1h-1zM1520 563h1v1h-1zM528 546h1v1h-1zM545 546h1v1h-1zM562 546h1v1h-1zM579 546h1v1h-1zM596 546h1v1h-1zM614 546h1v1h-1zM631 546h1v1h-1zM648 546h1v1h-1zM665 546h1v1h-1zM682 546h1v1h-1zM699 546h1v1h-1zM716 546h1v1h-1zM733 546h1v1h-1zM750 546h1v1h-1zM768 546h1v1h-1zM785 546h1v1h-1zM802 546h1v1h-1zM819 546h1v1h-1zM836 546h1v1h-1zM853 546h1v1h-1zM870 546h1v1h-1zM887 546h1v1h-1zM904 546h1v1h-1zM921 546h1v1h-1zM938 546h1v1h-1zM956 546h1v1h-1zM973 546h1v1h-1zM990 546h1v1h-1zM1007 546h1v1h-1zM1024 546h1v1h-1zM1041 546h1v1h-1zM1058 546h1v1h-1zM1075 546h1v1h-1zM1092 546h1v1h-1zM1110 546h1v1h-1zM1127 546h1v1h-1zM1144 546h1v1h-1zM1161 546h1v1h-1zM1178 546h1v1h-1zM1195 546h1v1h-1zM1212 546h1v1h-1zM1229 546h1v1h-1zM1246 546h1v1h-1zM1263 546h1v1h-1zM1280 546h1v1h-1zM1298 546h1v1h-1zM1315 546h1v1h-1zM1332 546h1v1h-1zM1349 546h1v1h-1zM1366 546h1v1h-1zM1383 546h1v1h-1zM1400 546h1v1h-1zM1417 546h1v1h-1zM1434 546h1v1h-1zM1452 546h1v1h-1zM1469 546h1v1h-1zM1486 546h1v1h-1zM1503 546h1v1h-1zM1520 546h1v1h-1zM528 529h1v1h-1zM545 529h1v1h-1zM562 529h1v1h-1zM579 529h1v1h-1zM596 529h1v1h-1zM614 529h1v1h-1zM631 529h1v1h-1zM648 529h1v1h-1zM665 529h1v1h-1zM682 529h1v1h-1zM699 529h1v1h-1zM716 529h1v1h-1zM733 529h1v1h-1zM750 529h1v1h-1zM768 529h1v1h-1zM785 529h1v1h-1zM802 529h1v1h-1zM819 529h1v1h-1zM836 529h1v1h-1zM853 529h1v1h-1zM870 529h1v1h-1zM887 529h1v1h-1zM904 529h1v1h-1zM921 529h1v1h-1zM938 529h1v1h-1zM956 529h1v1h-1zM973 529h1v1h-1zM990 529h1v1h-1zM1007 529h1v1h-1zM1024 529h1v1h-1zM1041 529h1v1h-1zM1058 529h1v1h-1zM1075 529h1v1h-1zM1092 529h1v1h-1zM1110 529h1v1h-1zM1127 529h1v1h-1zM1144 529h1v1h-1zM1161 529h1v1h-1zM1178 529h1v1h-1zM1195 529h1v1h-1zM1212 529h1v1h-1zM1229 529h1v1h-1zM1246 529h1v1h-1zM1263 529h1v1h-1zM1280 529h1v1h-1zM1298 529h1v1h-1zM1315 529h1v1h-1zM1332 529h1v1h-1zM1349 529h1v1h-1zM1366 529h1v1h-1zM1383 529h1v1h-1zM1400 529h1v1h-1zM1417 529h1v1h-1zM1434 529h1v1h-1zM1452 529h1v1h-1zM1469 529h1v1h-1zM1486 529h1v1h-1zM1503 529h1v1h-1zM1520 529h1v1h-1zM528 512h1v1h-1zM545 512h1v1h-1zM562 512h1v1h-1zM579 512h1v1h-1zM596 512h1v1h-1zM614 512h1v1h-1zM631 512h1v1h-1zM648 512h1v1h-1zM665 512h1v1h-1zM682 512h1v1h-1zM699 512h1v1h-1zM716 512h1v1h-1zM733 512h1v1h-1zM750 512h1v1h-1zM768 512h1v1h-1zM785 512h1v1h-1zM802 512h1v1h-1zM819 512h1v1h-1zM836 512h1v1h-1zM853 512h1v1h-1zM870 512h1v1h-1zM887 512h1v1h-1zM904 512h1v1h-1zM921 512h1v1h-1zM938 512h1v1h-1zM956 512h1v1h-1zM973 512h1v1h-1zM990 512h1v1h-1zM1007 512h1v1h-1zM1024 512h1v1h-1zM1041 512h1v1h-1zM1058 512h1v1h-1zM1075 512h1v1h-1zM1092 512h1v1h-1zM1110 512h1v1h-1zM1127 512h1v1h-1zM1144 512h1v1h-1zM1161 512h1v1h-1zM1178 512h1v1h-1zM1195 512h1v1h-1zM1212 512h1v1h-1zM1229 512h1v1h-1zM1246 512h1v1h-1zM1263 512h1v1h-1zM1280 512h1v1h-1zM1298 512h1v1h-1zM1315 512h1v1h-1zM1332 512h1v1h-1zM1349 512h1v1h-1zM1366 512h1v1h-1zM1383 512h1v1h-1zM1400 512h1v1h-1zM1417 512h1v1h-1zM1434 512h1v1h-1zM1452 512h1v1h-1zM1469 512h1v1h-1zM1486 512h1v1h-1zM1503 512h1v1h-1zM1520 512h1v1h-1zM528 494h1v1h-1zM545 494h1v1h-1zM562 494h1v1h-1zM579 494h1v1h-1zM596 494h1v1h-1zM614 494h1v1h-1zM631 494h1v1h-1zM648 494h1v1h-1zM665 494h1v1h-1zM682 494h1v1h-1zM699 494h1v1h-1zM716 494h1v1h-1zM733 494h1v1h-1zM750 494h1v1h-1zM768 494h1v1h-1zM785 494h1v1h-1zM802 494h1v1h-1zM819 494h1v1h-1zM836 494h1v1h-1zM853 494h1v1h-1zM870 494h1v1h-1zM887 494h1v1h-1zM904 494h1v1h-1zM921 494h1v1h-1zM938 494h1v1h-1zM956 494h1v1h-1zM973 494h1v1h-1zM990 494h1v1h-1zM1007 494h1v1h-1zM1024 494h1v1h-1zM1041 494h1v1h-1zM1058 494h1v1h-1zM1075 494h1v1h-1zM1092 494h1v1h-1zM1110 494h1v1h-1zM1127 494h1v1h-1zM1144 494h1v1h-1zM1161 494h1v1h-1zM1178 494h1v1h-1zM1195 494h1v1h-1zM1212 494h1v1h-1zM1229 494h1v1h-1zM1246 494h1v1h-1zM1263 494h1v1h-1zM1280 494h1v1h-1zM1298 494h1v1h-1zM1315 494h1v1h-1zM1332 494h1v1h-1zM1349 494h1v1h-1zM1366 494h1v1h-1zM1383 494h1v1h-1zM1400 494h1v1h-1zM1417 494h1v1h-1zM1434 494h1v1h-1zM1452 494h1v1h-1zM1469 494h1v1h-1zM1486 494h1v1h-1zM1503 494h1v1h-1zM1520 494h1v1h-1zM528 477h1v1h-1zM545 477h1v1h-1zM562 477h1v1h-1zM579 477h1v1h-1zM596 477h1v1h-1zM614 477h1v1h-1zM631 477h1v1h-1zM648 477h1v1h-1zM665 477h1v1h-1zM682 477h1v1h-1zM699 477h1v1h-1zM716 477h1v1h-1zM733 477h1v1h-1zM750 477h1v1h-1zM768 477h1v1h-1zM785 477h1v1h-1zM802 477h1v1h-1zM819 477h1v1h-1zM836 477h1v1h-1zM853 477h1v1h-1zM870 477h1v1h-1zM887 477h1v1h-1zM904 477h1v1h-1zM921 477h1v1h-1zM938 477h1v1h-1zM956 477h1v1h-1zM973 477h1v1h-1zM990 477h1v1h-1zM1007 477h1v1h-1zM1024 477h1v1h-1zM1041 477h1v1h-1zM1058 477h1v1h-1zM1075 477h1v1h-1zM1092 477h1v1h-1zM1110 477h1v1h-1zM1127 477h1v1h-1zM1144 477h1v1h-1zM1161 477h1v1h-1zM1178 477h1v1h-1zM1195 477h1v1h-1zM1212 477h1v1h-1zM1229 477h1v1h-1zM1246 477h1v1h-1zM1263 477h1v1h-1zM1280 477h1v1h-1zM1298 477h1v1h-1zM1315 477h1v1h-1zM1332 477h1v1h-1zM1349 477h1v1h-1zM1366 477h1v1h-1zM1383 477h1v1h-1zM1400 477h1v1h-1zM1417 477h1v1h-1zM1434 477h1v1h-1zM1452 477h1v1h-1zM1469 477h1v1h-1zM1486 477h1v1h-1zM1503 477h1v1h-1zM1520 477h1v1h-1zM528 460h1v1h-1zM545 460h1v1h-1zM562 460h1v1h-1zM579 460h1v1h-1zM596 460h1v1h-1zM614 460h1v1h-1zM631 460h1v1h-1zM648 460h1v1h-1zM665 460h1v1h-1zM682 460h1v1h-1zM699 460h1v1h-1zM716 460h1v1h-1zM733 460h1v1h-1zM750 460h1v1h-1zM768 460h1v1h-1zM785 460h1v1h-1zM802 460h1v1h-1zM819 460h1v1h-1zM836 460h1v1h-1zM853 460h1v1h-1zM870 460h1v1h-1zM887 460h1v1h-1zM904 460h1v1h-1zM921 460h1v1h-1zM938 460h1v1h-1zM956 460h1v1h-1zM973 460h1v1h-1zM990 460h1v1h-1zM1007 460h1v1h-1zM1024 460h1v1h-1zM1041 460h1v1h-1zM1058 460h1v1h-1zM1075 460h1v1h-1zM1092 460h1v1h-1zM1110 460h1v1h-1zM1127 460h1v1h-1zM1144 460h1v1h-1zM1161 460h1v1h-1zM1178 460h1v1h-1zM1195 460h1v1h-1zM1212 460h1v1h-1zM1229 460h1v1h-1zM1246 460h1v1h-1zM1263 460h1v1h-1zM1280 460h1v1h-1zM1298 460h1v1h-1zM1315 460h1v1h-1zM1332 460h1v1h-1zM1349 460h1v1h-1zM1366 460h1v1h-1zM1383 460h1v1h-1zM1400 460h1v1h-1zM1417 460h1v1h-1zM1434 460h1v1h-1zM1452 460h1v1h-1zM1469 460h1v1h-1zM1486 460h1v1h-1zM1503 460h1v1h-1zM1520 460h1v1h-1zM528 443h1v1h-1zM545 443h1v1h-1zM562 443h1v1h-1zM579 443h1v1h-1zM596 443h1v1h-1zM614 443h1v1h-1zM631 443h1v1h-1zM648 443h1v1h-1zM665 443h1v1h-1zM682 443h1v1h-1zM699 443h1v1h-1zM716 443h1v1h-1zM733 443h1v1h-1zM750 443h1v1h-1zM768 443h1v1h-1zM785 443h1v1h-1zM802 443h1v1h-1zM819 443h1v1h-1zM836 443h1v1h-1zM853 443h1v1h-1zM870 443h1v1h-1zM887 443h1v1h-1zM904 443h1v1h-1zM921 443h1v1h-1zM938 443h1v1h-1zM956 443h1v1h-1zM973 443h1v1h-1zM990 443h1v1h-1zM1007 443h1v1h-1zM1024 443h1v1h-1zM1041 443h1v1h-1zM1058 443h1v1h-1zM1075 443h1v1h-1zM1092 443h1v1h-1zM1110 443h1v1h-1zM1127 443h1v1h-1zM1144 443h1v1h-1zM1161 443h1v1h-1zM1178 443h1v1h-1zM1195 443h1v1h-1zM1212 443h1v1h-1zM1229 443h1v1h-1zM1246 443h1v1h-1zM1263 443h1v1h-1zM1280 443h1v1h-1zM1298 443h1v1h-1zM1315 443h1v1h-1zM1332 443h1v1h-1zM1349 443h1v1h-1zM1366 443h1v1h-1zM1383 443h1v1h-1zM1400 443h1v1h-1zM1417 443h1v1h-1zM1434 443h1v1h-1zM1452 443h1v1h-1zM1469 443h1v1h-1zM1486 443h1v1h-1zM1503 443h1v1h-1zM1520 443h1v1h-1zM528 426h1v1h-1zM545 426h1v1h-1zM562 426h1v1h-1zM579 426h1v1h-1zM596 426h1v1h-1zM614 426h1v1h-1zM631 426h1v1h-1zM648 426h1v1h-1zM665 426h1v1h-1zM682 426h1v1h-1zM699 426h1v1h-1zM716 426h1v1h-1zM733 426h1v1h-1zM750 426h1v1h-1zM768 426h1v1h-1zM785 426h1v1h-1zM802 426h1v1h-1zM819 426h1v1h-1zM836 426h1v1h-1zM853 426h1v1h-1zM870 426h1v1h-1zM887 426h1v1h-1zM904 426h1v1h-1zM921 426h1v1h-1zM938 426h1v1h-1zM956 426h1v1h-1zM973 426h1v1h-1zM990 426h1v1h-1zM1007 426h1v1h-1zM1024 426h1v1h-1zM1041 426h1v1h-1zM1058 426h1v1h-1zM1075 426h1v1h-1zM1092 426h1v1h-1zM1110 426h1v1h-1zM1127 426h1v1h-1zM1144 426h1v1h-1zM1161 426h1v1h-1zM1178 426h1v1h-1zM1195 426h1v1h-1zM1212 426h1v1h-1zM1229 426h1v1h-1zM1246 426h1v1h-1zM1263 426h1v1h-1zM1280 426h1v1h-1zM1298 426h1v1h-1zM1315 426h1v1h-1zM1332 426h1v1h-1zM1349 426h1v1h-1zM1366 426h1v1h-1zM1383 426h1v1h-1zM1400 426h1v1h-1zM1417 426h1v1h-1zM1434 426h1v1h-1zM1452 426h1v1h-1zM1469 426h1v1h-1zM1486 426h1v1h-1zM1503 426h1v1h-1zM1520 426h1v1h-1zM528 409h1v1h-1zM545 409h1v1h-1zM562 409h1v1h-1zM579 409h1v1h-1zM596 409h1v1h-1zM614 409h1v1h-1zM631 409h1v1h-1zM648 409h1v1h-1zM665 409h1v1h-1zM682 409h1v1h-1zM699 409h1v1h-1zM716 409h1v1h-1zM733 409h1v1h-1zM750 409h1v1h-1zM768 409h1v1h-1zM785 409h1v1h-1zM802 409h1v1h-1zM819 409h1v1h-1zM836 409h1v1h-1zM853 409h1v1h-1zM870 409h1v1h-1zM887 409h1v1h-1zM904 409h1v1h-1zM921 409h1v1h-1zM938 409h1v1h-1zM956 409h1v1h-1zM973 409h1v1h-1zM990 409h1v1h-1zM1007 409h1v1h-1zM1024 409h1v1h-1zM1041 409h1v1h-1zM1058 409h1v1h-1zM1075 409h1v1h-1zM1092 409h1v1h-1zM1110 409h1v1h-1zM1127 409h1v1h-1zM1144 409h1v1h-1zM1161 409h1v1h-1zM1178 409h1v1h-1zM1195 409h1v1h-1zM1212 409h1v1h-1zM1229 409h1v1h-1zM1246 409h1v1h-1zM1263 409h1v1h-1zM1280 409h1v1h-1zM1298 409h1v1h-1zM1315 409h1v1h-1zM1332 409h1v1h-1zM1349 409h1v1h-1zM1366 409h1v1h-1zM1383 409h1v1h-1zM1400 409h1v1h-1zM1417 409h1v1h-1zM1434 409h1v1h-1zM1452 409h1v1h-1zM1469 409h1v1h-1zM1486 409h1v1h-1zM1503 409h1v1h-1zM1520 409h1v1h-1zM528 392h1v1h-1zM545 392h1v1h-1zM562 392h1v1h-1zM579 392h1v1h-1zM596 392h1v1h-1zM614 392h1v1h-1zM631 392h1v1h-1zM648 392h1v1h-1zM665 392h1v1h-1zM682 392h1v1h-1zM699 392h1v1h-1zM716 392h1v1h-1zM733 392h1v1h-1zM750 392h1v1h-1zM768 392h1v1h-1zM785 392h1v1h-1zM802 392h1v1h-1zM819 392h1v1h-1zM836 392h1v1h-1zM853 392h1v1h-1zM870 392h1v1h-1zM887 392h1v1h-1zM904 392h1v1h-1zM921 392h1v1h-1zM938 392h1v1h-1zM956 392h1v1h-1zM973 392h1v1h-1zM990 392h1v1h-1zM1007 392h1v1h-1zM1024 392h1v1h-1zM1041 392h1v1h-1zM1058 392h1v1h-1zM1075 392h1v1h-1zM1092 392h1v1h-1zM1110 392h1v1h-1zM1127 392h1v1h-1zM1144 392h1v1h-1zM1161 392h1v1h-1zM1178 392h1v1h-1zM1195 392h1v1h-1zM1212 392h1v1h-1zM1229 392h1v1h-1zM1246 392h1v1h-1zM1263 392h1v1h-1zM1280 392h1v1h-1zM1298 392h1v1h-1zM1315 392h1v1h-1zM1332 392h1v1h-1zM1349 392h1v1h-1zM1366 392h1v1h-1zM1383 392h1v1h-1zM1400 392h1v1h-1zM1417 392h1v1h-1zM1434 392h1v1h-1zM1452 392h1v1h-1zM1469 392h1v1h-1zM1486 392h1v1h-1zM1503 392h1v1h-1zM1520 392h1v1h-1zM528 375h1v1h-1zM545 375h1v1h-1zM562 375h1v1h-1zM579 375h1v1h-1zM596 375h1v1h-1zM614 375h1v1h-1zM631 375h1v1h-1zM648 375h1v1h-1zM665 375h1v1h-1zM682 375h1v1h-1zM699 375h1v1h-1zM716 375h1v1h-1zM733 375h1v1h-1zM750 375h1v1h-1zM768 375h1v1h-1zM785 375h1v1h-1zM802 375h1v1h-1zM819 375h1v1h-1zM836 375h1v1h-1zM853 375h1v1h-1zM870 375h1v1h-1zM887 375h1v1h-1zM904 375h1v1h-1zM921 375h1v1h-1zM938 375h1v1h-1zM956 375h1v1h-1zM973 375h1v1h-1zM990 375h1v1h-1zM1007 375h1v1h-1zM1024 375h1v1h-1zM1041 375h1v1h-1zM1058 375h1v1h-1zM1075 375h1v1h-1zM1092 375h1v1h-1zM1110 375h1v1h-1zM1127 375h1v1h-1zM1144 375h1v1h-1zM1161 375h1v1h-1zM1178 375h1v1h-1zM1195 375h1v1h-1zM1212 375h1v1h-1zM1229 375h1v1h-1zM1246 375h1v1h-1zM1263 375h1v1h-1zM1280 375h1v1h-1zM1298 375h1v1h-1zM1315 375h1v1h-1zM1332 375h1v1h-1zM1349 375h1v1h-1zM1366 375h1v1h-1zM1383 375h1v1h-1zM1400 375h1v1h-1zM1417 375h1v1h-1zM1434 375h1v1h-1zM1452 375h1v1h-1zM1469 375h1v1h-1zM1486 375h1v1h-1zM1503 375h1v1h-1zM1520 375h1v1h-1zM528 358h1v1h-1zM545 358h1v1h-1zM562 358h1v1h-1zM579 358h1v1h-1zM596 358h1v1h-1zM614 358h1v1h-1zM631 358h1v1h-1zM648 358h1v1h-1zM665 358h1v1h-1zM682 358h1v1h-1zM699 358h1v1h-1zM716 358h1v1h-1zM733 358h1v1h-1zM750 358h1v1h-1zM768 358h1v1h-1zM785 358h1v1h-1zM802 358h1v1h-1zM819 358h1v1h-1zM836 358h1v1h-1zM853 358h1v1h-1zM870 358h1v1h-1zM887 358h1v1h-1zM904 358h1v1h-1zM921 358h1v1h-1zM938 358h1v1h-1zM956 358h1v1h-1zM973 358h1v1h-1zM990 358h1v1h-1zM1007 358h1v1h-1zM1024 358h1v1h-1zM1041 358h1v1h-1zM1058 358h1v1h-1zM1075 358h1v1h-1zM1092 358h1v1h-1zM1110 358h1v1h-1zM1127 358h1v1h-1zM1144 358h1v1h-1zM1161 358h1v1h-1zM1178 358h1v1h-1zM1195 358h1v1h-1zM1212 358h1v1h-1zM1229 358h1v1h-1zM1246 358h1v1h-1zM1263 358h1v1h-1zM1280 358h1v1h-1zM1298 358h1v1h-1zM1315 358h1v1h-1zM1332 358h1v1h-1zM1349 358h1v1h-1zM1366 358h1v1h-1zM1383 358h1v1h-1zM1400 358h1v1h-1zM1417 358h1v1h-1zM1434 358h1v1h-1zM1452 358h1v1h-1zM1469 358h1v1h-1zM1486 358h1v1h-1zM1503 358h1v1h-1zM1520 358h1v1h-1zM528 341h1v1h-1zM545 341h1v1h-1zM562 341h1v1h-1zM579 341h1v1h-1zM596 341h1v1h-1zM614 341h1v1h-1zM631 341h1v1h-1zM648 341h1v1h-1zM665 341h1v1h-1zM682 341h1v1h-1zM699 341h1v1h-1zM716 341h1v1h-1zM733 341h1v1h-1zM750 341h1v1h-1zM768 341h1v1h-1zM785 341h1v1h-1zM802 341h1v1h-1zM819 341h1v1h-1zM836 341h1v1h-1zM853 341h1v1h-1zM870 341h1v1h-1zM887 341h1v1h-1zM904 341h1v1h-1zM921 341h1v1h-1zM938 341h1v1h-1zM956 341h1v1h-1zM973 341h1v1h-1zM990 341h1v1h-1zM1007 341h1v1h-1zM1024 341h1v1h-1zM1041 341h1v1h-1zM1058 341h1v1h-1zM1075 341h1v1h-1zM1092 341h1v1h-1zM1110 341h1v1h-1zM1127 341h1v1h-1zM1144 341h1v1h-1zM1161 341h1v1h-1zM1178 341h1v1h-1zM1195 341h1v1h-1zM1212 341h1v1h-1zM1229 341h1v1h-1zM1246 341h1v1h-1zM1263 341h1v1h-1zM1280 341h1v1h-1zM1298 341h1v1h-1zM1315 341h1v1h-1zM1332 341h1v1h-1zM1349 341h1v1h-1zM1366 341h1v1h-1zM1383 341h1v1h-1zM1400 341h1v1h-1zM1417 341h1v1h-1zM1434 341h1v1h-1zM1452 341h1v1h-1zM1469 341h1v1h-1zM1486 341h1v1h-1zM1503 341h1v1h-1zM1520 341h1v1h-1zM528 324h1v1h-1zM545 324h1v1h-1zM562 324h1v1h-1zM579 324h1v1h-1zM596 324h1v1h-1zM614 324h1v1h-1zM631 324h1v1h-1zM648 324h1v1h-1zM665 324h1v1h-1zM682 324h1v1h-1zM699 324h1v1h-1zM716 324h1v1h-1zM733 324h1v1h-1zM750 324h1v1h-1zM768 324h1v1h-1zM785 324h1v1h-1zM802 324h1v1h-1zM819 324h1v1h-1zM836 324h1v1h-1zM853 324h1v1h-1zM870 324h1v1h-1zM887 324h1v1h-1zM904 324h1v1h-1zM921 324h1v1h-1zM938 324h1v1h-1zM956 324h1v1h-1zM973 324h1v1h-1zM990 324h1v1h-1zM1007 324h1v1h-1zM1024 324h1v1h-1zM1041 324h1v1h-1zM1058 324h1v1h-1zM1075 324h1v1h-1zM1092 324h1v1h-1zM1110 324h1v1h-1zM1127 324h1v1h-1zM1144 324h1v1h-1zM1161 324h1v1h-1zM1178 324h1v1h-1zM1195 324h1v1h-1zM1212 324h1v1h-1zM1229 324h1v1h-1zM1246 324h1v1h-1zM1263 324h1v1h-1zM1280 324h1v1h-1zM1298 324h1v1h-1zM1315 324h1v1h-1zM1332 324h1v1h-1zM1349 324h1v1h-1zM1366 324h1v1h-1zM1383 324h1v1h-1zM1400 324h1v1h-1zM1417 324h1v1h-1zM1434 324h1v1h-1zM1452 324h1v1h-1zM1469 324h1v1h-1zM1486 324h1v1h-1zM1503 324h1v1h-1zM1520 324h1v1h-1zM528 306h1v1h-1zM545 306h1v1h-1zM562 306h1v1h-1zM579 306h1v1h-1zM596 306h1v1h-1zM614 306h1v1h-1zM631 306h1v1h-1zM648 306h1v1h-1zM665 306h1v1h-1zM682 306h1v1h-1zM699 306h1v1h-1zM716 306h1v1h-1zM733 306h1v1h-1zM750 306h1v1h-1zM768 306h1v1h-1zM785 306h1v1h-1zM802 306h1v1h-1zM819 306h1v1h-1zM836 306h1v1h-1zM853 306h1v1h-1zM870 306h1v1h-1zM887 306h1v1h-1zM904 306h1v1h-1zM921 306h1v1h-1zM938 306h1v1h-1zM956 306h1v1h-1zM973 306h1v1h-1zM990 306h1v1h-1zM1007 306h1v1h-1zM1024 306h1v1h-1zM1041 306h1v1h-1zM1058 306h1v1h-1zM1075 306h1v1h-1zM1092 306h1v1h-1zM1110 306h1v1h-1zM1127 306h1v1h-1zM1144 306h1v1h-1zM1161 306h1v1h-1zM1178 306h1v1h-1zM1195 306h1v1h-1zM1212 306h1v1h-1zM1229 306h1v1h-1zM1246 306h1v1h-1zM1263 306h1v1h-1zM1280 306h1v1h-1zM1298 306h1v1h-1zM1315 306h1v1h-1zM1332 306h1v1h-1zM1349 306h1v1h-1zM1366 306h1v1h-1zM1383 306h1v1h-1zM1400 306h1v1h-1zM1417 306h1v1h-1zM1434 306h1v1h-1zM1452 306h1v1h-1zM1469 306h1v1h-1zM1486 306h1v1h-1zM1503 306h1v1h-1zM1520 306h1v1h-1zM528 289h1v1h-1zM545 289h1v1h-1zM562 289h1v1h-1zM579 289h1v1h-1zM596 289h1v1h-1zM614 289h1v1h-1zM631 289h1v1h-1zM648 289h1v1h-1zM665 289h1v1h-1zM682 289h1v1h-1zM699 289h1v1h-1zM716 289h1v1h-1zM733 289h1v1h-1zM750 289h1v1h-1zM768 289h1v1h-1zM785 289h1v1h-1zM802 289h1v1h-1zM819 289h1v1h-1zM836 289h1v1h-1zM853 289h1v1h-1zM870 289h1v1h-1zM887 289h1v1h-1zM904 289h1v1h-1zM921 289h1v1h-1zM938 289h1v1h-1zM956 289h1v1h-1zM973 289h1v1h-1zM990 289h1v1h-1zM1007 289h1v1h-1zM1024 289h1v1h-1zM1041 289h1v1h-1zM1058 289h1v1h-1zM1075 289h1v1h-1zM1092 289h1v1h-1zM1110 289h1v1h-1zM1127 289h1v1h-1zM1144 289h1v1h-1zM1161 289h1v1h-1zM1178 289h1v1h-1zM1195 289h1v1h-1zM1212 289h1v1h-1zM1229 289h1v1h-1zM1246 289h1v1h-1zM1263 289h1v1h-1zM1280 289h1v1h-1zM1298 289h1v1h-1zM1315 289h1v1h-1zM1332 289h1v1h-1zM1349 289h1v1h-1zM1366 289h1v1h-1zM1383 289h1v1h-1zM1400 289h1v1h-1zM1417 289h1v1h-1zM1434 289h1v1h-1zM1452 289h1v1h-1zM1469 289h1v1h-1zM1486 289h1v1h-1zM1503 289h1v1h-1zM1520 289h1v1h-1zM528 272h1v1h-1zM545 272h1v1h-1zM562 272h1v1h-1zM579 272h1v1h-1zM596 272h1v1h-1zM614 272h1v1h-1zM631 272h1v1h-1zM648 272h1v1h-1zM665 272h1v1h-1zM682 272h1v1h-1zM699 272h1v1h-1zM716 272h1v1h-1zM733 272h1v1h-1zM750 272h1v1h-1zM768 272h1v1h-1zM785 272h1v1h-1zM802 272h1v1h-1zM819 272h1v1h-1zM836 272h1v1h-1zM853 272h1v1h-1zM870 272h1v1h-1zM887 272h1v1h-1zM904 272h1v1h-1zM921 272h1v1h-1zM938 272h1v1h-1zM956 272h1v1h-1zM973 272h1v1h-1zM990 272h1v1h-1zM1007 272h1v1h-1zM1024 272h1v1h-1zM1041 272h1v1h-1zM1058 272h1v1h-1zM1075 272h1v1h-1zM1092 272h1v1h-1zM1110 272h1v1h-1zM1127 272h1v1h-1zM1144 272h1v1h-1zM1161 272h1v1h-1zM1178 272h1v1h-1zM1195 272h1v1h-1zM1212 272h1v1h-1zM1229 272h1v1h-1zM1246 272h1v1h-1zM1263 272h1v1h-1zM1280 272h1v1h-1zM1298 272h1v1h-1zM1315 272h1v1h-1zM1332 272h1v1h-1zM1349 272h1v1h-1zM1366 272h1v1h-1zM1383 272h1v1h-1zM1400 272h1v1h-1zM1417 272h1v1h-1zM1434 272h1v1h-1zM1452 272h1v1h-1zM1469 272h1v1h-1zM1486 272h1v1h-1zM1503 272h1v1h-1zM1520 272h1v1h-1zM528 255h1v1h-1zM545 255h1v1h-1zM562 255h1v1h-1zM579 255h1v1h-1zM596 255h1v1h-1zM614 255h1v1h-1zM631 255h1v1h-1zM648 255h1v1h-1zM665 255h1v1h-1zM682 255h1v1h-1zM699 255h1v1h-1zM716 255h1v1h-1zM733 255h1v1h-1zM750 255h1v1h-1zM768 255h1v1h-1zM785 255h1v1h-1zM802 255h1v1h-1zM819 255h1v1h-1zM836 255h1v1h-1zM853 255h1v1h-1zM870 255h1v1h-1zM887 255h1v1h-1zM904 255h1v1h-1zM921 255h1v1h-1zM938 255h1v1h-1zM956 255h1v1h-1zM973 255h1v1h-1zM990 255h1v1h-1zM1007 255h1v1h-1zM1024 255h1v1h-1zM1041 255h1v1h-1zM1058 255h1v1h-1zM1075 255h1v1h-1zM1092 255h1v1h-1zM1110 255h1v1h-1zM1127 255h1v1h-1zM1144 255h1v1h-1zM1161 255h1v1h-1zM1178 255h1v1h-1zM1195 255h1v1h-1zM1212 255h1v1h-1zM1229 255h1v1h-1zM1246 255h1v1h-1zM1263 255h1v1h-1zM1280 255h1v1h-1zM1298 255h1v1h-1zM1315 255h1v1h-1zM1332 255h1v1h-1zM1349 255h1v1h-1zM1366 255h1v1h-1zM1383 255h1v1h-1zM1400 255h1v1h-1zM1417 255h1v1h-1zM1434 255h1v1h-1zM1452 255h1v1h-1zM1469 255h1v1h-1zM1486 255h1v1h-1zM1503 255h1v1h-1zM1520 255h1v1h-1zM528 238h1v1h-1zM545 238h1v1h-1zM562 238h1v1h-1zM579 238h1v1h-1zM596 238h1v1h-1zM614 238h1v1h-1zM631 238h1v1h-1zM648 238h1v1h-1zM665 238h1v1h-1zM682 238h1v1h-1zM699 238h1v1h-1zM716 238h1v1h-1zM733 238h1v1h-1zM750 238h1v1h-1zM768 238h1v1h-1zM785 238h1v1h-1zM802 238h1v1h-1zM819 238h1v1h-1zM836 238h1v1h-1zM853 238h1v1h-1zM870 238h1v1h-1zM887 238h1v1h-1zM904 238h1v1h-1zM921 238h1v1h-1zM938 238h1v1h-1zM956 238h1v1h-1zM973 238h1v1h-1zM990 238h1v1h-1zM1007 238h1v1h-1zM1024 238h1v1h-1zM1041 238h1v1h-1zM1058 238h1v1h-1zM1075 238h1v1h-1zM1092 238h1v1h-1zM1110 238h1v1h-1zM1127 238h1v1h-1zM1144 238h1v1h-1zM1161 238h1v1h-1zM1178 238h1v1h-1zM1195 238h1v1h-1zM1212 238h1v1h-1zM1229 238h1v1h-1zM1246 238h1v1h-1zM1263 238h1v1h-1zM1280 238h1v1h-1zM1298 238h1v1h-1zM1315 238h1v1h-1zM1332 238h1v1h-1zM1349 238h1v1h-1zM1366 238h1v1h-1zM1383 238h1v1h-1zM1400 238h1v1h-1zM1417 238h1v1h-1zM1434 238h1v1h-1zM1452 238h1v1h-1zM1469 238h1v1h-1zM1486 238h1v1h-1zM1503 238h1v1h-1zM1520 238h1v1h-1zM528 221h1v1h-1zM545 221h1v1h-1zM562 221h1v1h-1zM579 221h1v1h-1zM596 221h1v1h-1zM614 221h1v1h-1zM631 221h1v1h-1zM648 221h1v1h-1zM665 221h1v1h-1zM682 221h1v1h-1zM699 221h1v1h-1zM716 221h1v1h-1zM733 221h1v1h-1zM750 221h1v1h-1zM768 221h1v1h-1zM785 221h1v1h-1zM802 221h1v1h-1zM819 221h1v1h-1zM836 221h1v1h-1zM853 221h1v1h-1zM870 221h1v1h-1zM887 221h1v1h-1zM904 221h1v1h-1zM921 221h1v1h-1zM938 221h1v1h-1zM956 221h1v1h-1zM973 221h1v1h-1zM990 221h1v1h-1zM1007 221h1v1h-1zM1024 221h1v1h-1zM1041 221h1v1h-1zM1058 221h1v1h-1zM1075 221h1v1h-1zM1092 221h1v1h-1zM1110 221h1v1h-1zM1127 221h1v1h-1zM1144 221h1v1h-1zM1161 221h1v1h-1zM1178 221h1v1h-1zM1195 221h1v1h-1zM1212 221h1v1h-1zM1229 221h1v1h-1zM1246 221h1v1h-1zM1263 221h1v1h-1zM1280 221h1v1h-1zM1298 221h1v1h-1zM1315 221h1v1h-1zM1332 221h1v1h-1zM1349 221h1v1h-1zM1366 221h1v1h-1zM1383 221h1v1h-1zM1400 221h1v1h-1zM1417 221h1v1h-1zM1434 221h1v1h-1zM1452 221h1v1h-1zM1469 221h1v1h-1zM1486 221h1v1h-1zM1503 221h1v1h-1zM1520 221h1v1h-1z" fill="#222"/>
<text x="375" y="206" font-size="13.4" fill="#111" textLength="214.00" lengthAdjust="spacingAndGlyphs" >Hold down &lt;F2&gt; for dynamic viewing.</text>
<text x="375" y="221.7" font-size="13.4" fill="#111" textLength="283.00" lengthAdjust="spacingAndGlyphs" >&lt;F8&gt; or &lt;Shift-roll&gt; to find.next valid filter.setting.</text>
<g transform="translate(731,175)"><path d="M8 1.8 H15.3 V14.2 H8" fill="none" stroke="#1d4f6f" stroke-width="2.6"/><path d="M0.8 8 L6 3.5 V6.3 H11.5 V9.7 H6 V12.5 Z" fill="#e81c1c"/></g>
<g transform="translate(758,174)"><g transform="rotate(-45 8 8)"><rect x="0" y="5" width="17" height="6" rx="1" fill="#e2c24a" stroke="#9a7a1a" stroke-width=".7"/><rect x="0" y="5" width="5" height="6" fill="#d9303a"/><rect x="5" y="5" width="2.5" height="6" fill="#eee"/></g></g>
<g transform="translate(783,175)"><g transform="rotate(-38 8 8)"><path d="M-1 6 H9 V10 H-1 Q-2 8 -1 6 Z" fill="#d9c070" stroke="#8a7a3a" stroke-width=".7"/><rect x="9" y="6.5" width="3" height="3" fill="#8a8d90"/><path d="M12 6 H17 Q18.5 8 17 10 H12 Z" fill="#6a62b8"/></g></g>
<rect x="806.5" y="171.5" width="24" height="23" fill="#fadf86" stroke="#e6b238"/>
<g transform="translate(809,174)"><path d="M2 3 L5 1 L9 2 V6 L6 8 L2 7 Z" fill="#cfe9f2" stroke="#6fa9bf" stroke-width=".7"/><path d="M11 3 L14 1 L18 2 V6 L15 8 L11 7 Z" fill="#cfe9f2" stroke="#6fa9bf" stroke-width=".7"/><path d="M6 12 L10 10 L14 12 V16 L10 18 L6 16 Z" fill="#1f9ad0" stroke="#136a98" stroke-width=".7"/><path d="M1.5 9 V15.5 H5 M18.5 9 V15.5 H15" fill="none" stroke="#d8262a" stroke-width="1.6"/></g>
<g transform="translate(834,174)"><rect x="1" y="7.5" width="10" height="11" fill="#a9abad"/><path d="M11 0.5 H19.5 L16.5 4.5 V8.5 L14 7 V4.5 Z" fill="#a9abad"/></g>
<text x="888" y="187" font-size="12.5" fill="#111" textLength="14.00" lengthAdjust="spacingAndGlyphs" >All</text>
<g transform="translate(936,174)"><path d="M2.5 5 L14 16.5" stroke="#2a9cc8" stroke-width="2.4"/><path d="M5 9 H9" stroke="#aaa" stroke-width="1"/><path d="M12 10 L13 14" stroke="#bbb" stroke-width="1.2"/><circle cx="14" cy="6.5" r="1.6" fill="#e0262a"/><path d="M11.5 1 L13.5 4 M13.5 1 L11.5 4 M15 1 L16.2 2.6 L17.4 1 M16.2 2.6 V4" stroke="#e0262a" stroke-width=".9" fill="none"/></g>
<g transform="translate(963,175)"><rect x="0.5" y="0.5" width="16.5" height="15.5" fill="#fff" stroke="#8cc4e4" stroke-width="1"/><circle cx="4.2" cy="3.6" r="1.1" fill="#e0262a"/><circle cx="4.2" cy="8.0" r="1.1" fill="#e0262a"/><circle cx="4.2" cy="12.4" r="1.1" fill="#e0262a"/><circle cx="8.600000000000001" cy="3.6" r="1.1" fill="#e0262a"/><circle cx="8.600000000000001" cy="8.0" r="1.1" fill="#e0262a"/><circle cx="8.600000000000001" cy="12.4" r="1.1" fill="#e0262a"/><circle cx="13.0" cy="3.6" r="1.1" fill="#e0262a"/><circle cx="13.0" cy="8.0" r="1.1" fill="#e0262a"/><circle cx="13.0" cy="12.4" r="1.1" fill="#e0262a"/></g>
<path d="M986.5 181.5 H992.5 L989.5 184.5 Z" fill="#111"/>
<g transform="translate(1001,174)"><rect x="0.8" y="0.8" width="16.5" height="16.5" fill="#d8eef8" stroke="#2a9ad0" stroke-width="1.6"/><circle cx="9" cy="9" r="6.6" fill="#f4c430" stroke="#d89a18" stroke-width=".8"/><rect x="6" y="5.5" width="5.5" height="7" fill="#f4f4f0" stroke="#aab" stroke-width=".6"/><path d="M15 15 L18 18" stroke="#2a6aa0" stroke-width="1.2"/></g>
<path d="M1024.5 181.5 H1030.5 L1027.5 184.5 Z" fill="#111"/>
<g transform="translate(1040,174)"><path d="M2 0 V17 M14.5 0 V17" stroke="#2a9cc8" stroke-width="1.8"/><path d="M4 5.5 H12.5" stroke="#2a9cc8" stroke-width="1.4"/><path d="M4 5.5 L6 4 V7 Z M12.5 5.5 L10.5 4 V7Z" fill="#2a9cc8"/><path d="M1 15.8 H15.5" stroke="#e0262a" stroke-width="1.8"/></g>
<defs><linearGradient id="mon" x1="0" y1="0" x2="1" y2="1"><stop offset="0" stop-color="#3a4a5e"/><stop offset=".5" stop-color="#8a9bb0"/><stop offset="1" stop-color="#3a4a5e"/></linearGradient></defs>
<g transform="translate(1065,174)"><rect x="0.5" y="0.5" width="17.5" height="13" fill="#777a7e" stroke="#555"/><rect x="2" y="2" width="14.5" height="10" fill="url(#mon)"/><path d="M4 14 H14 L15.5 17 H3 Z" fill="#8a8d90"/></g>
<path d="M1089 181.5 H1095 L1092 184.5 Z" fill="#111"/>
<g transform="translate(1104,174)"><circle cx="8" cy="8.5" r="7" fill="none" stroke="#5aa9cc" stroke-width="1.3" stroke-dasharray="1.6 2"/><circle cx="8" cy="8.5" r="4" fill="none" stroke="#7fbcd8" stroke-width="1" stroke-dasharray="1.2 1.8"/></g>
<rect x="1130" y="180" width="17" height="6" fill="#0a0a0a" />
<g transform="translate(1154,174)"><path d="M1 7 L11 2 L19 6 L9 11 Z" fill="#5fcbe0" stroke="#2a8fa8" stroke-width=".7"/><path d="M1 7 V11 L9 15 V11 Z" fill="#1f8fa8"/><path d="M9 11 V15 L19 10 V6 Z" fill="#2aa0b8"/></g>
<path d="M1178 181.5 H1184 L1181 184.5 Z" fill="#333"/>
<rect x="1191.5" y="171.5" width="119" height="22" fill="#fbfbfb" stroke="#c9cbce"/>
<line x1="1294.5" y1="172" x2="1294.5" y2="193" stroke="#d6d8db" stroke-width="1" />
<g transform="translate(1197,175)"><circle cx="5" cy="5.5" r="4" fill="#fff6c0" stroke="#9a8a3a" stroke-width="1.1"/><rect x="3" y="10" width="4" height="4" fill="#bfae5a"/></g>
<g transform="translate(1211,175)"><circle cx="7" cy="8" r="6.2" fill="#f3da3c" stroke="#5f6b8a" stroke-width="1.2"/></g>
<text x="1230" y="187" font-size="12" fill="#111" textLength="51.50" lengthAdjust="spacingAndGlyphs" >Layer0000</text>
<path d="M1299 180.5 H1305 L1302 183.5 Z" fill="#333"/>
<line x1="511.5" y1="862" x2="511.5" y2="922" stroke="#22bb22" stroke-width="1.6" />
<path d="M508 862 L511.5 868 L515 862 M511.5 868 V872" fill="none" stroke="#22bb22" stroke-width="1.2"/>
<line x1="511" y1="922.5" x2="560" y2="922.5" stroke="#ee1111" stroke-width="1.6" />
<path d="M562 916 L572 928 M572 916 L562 928" stroke="#ee1111" stroke-width="1.4"/>
<path d="M654.6 404 H882.7 L888.6 405.4 L895.1 411.6 L898.6 420.5 V424.3 H637.8 V415.4 L643.9 407.7 Z" fill="none" stroke="#0a0a0a" stroke-width="2.1" stroke-linejoin="round"/>
<path d="M670.3 424.3 V449 H865.9 V424.3" fill="none" stroke="#0a0a0a" stroke-width="2.1"/>
<path d="M639 420.8 H681 M855 420.8 H898" stroke="#555" stroke-width="1.1" stroke-dasharray="21 3"/>
<path d="M681 421.7 H855" stroke="#6a6a6a" stroke-width="2.6" stroke-dasharray="15 3"/>
<path d="M681.4 420 V449 M855.1 420 V449" stroke="#333" stroke-width="1.3" stroke-dasharray="12 5"/>
<path d="M730.4 410 V437.5 M806.3 410 V437.5 M762.5 405 V437.5 M773.3 405 V437.5 M716.7 422 V434 M819.6 422 V434" stroke="#333" stroke-width="1.3"/>
<path d="M716.7 438.3 H819.6" stroke="#333" stroke-width="1.3" stroke-dasharray="11.5 4"/>
<path d="M768.5 393 V414 M768.5 418 V460" stroke="#2222ee" stroke-width="1.5"/>
<line x1="884" y1="404.5" x2="983" y2="404.5" stroke="#333" stroke-width="1.1" />
<line x1="871" y1="449.5" x2="983" y2="449.5" stroke="#555" stroke-width="1.3" />
<line x1="972.5" y1="405" x2="972.5" y2="418" stroke="#111" stroke-width="1.2" />
<line x1="972.5" y1="440" x2="972.5" y2="449" stroke="#111" stroke-width="1.2" />
<path d="M970 413.5 L972.5 405 L975 413.5 Z M970 439.5 L972.5 448.5 L975 439.5 Z" fill="#111"/>
<path d="M957.5 433.5 h1" stroke="#111" stroke-width="1.6"/>
<g fill="none" stroke="#222" stroke-width="1.2"><path d="M973.5 423.8 H964.2 L963.6 428.6 Q966.5 427.3 970 427.6 Q974 428.3 974 431.2 Q973.6 434.4 968.5 434.5 Q964.5 434.6 962.8 432.8"/><path d="M979.8 426.8 Q980.8 423.6 984.5 423.6 Q988.6 423.8 988.6 426.6 Q988.4 428.8 984 431.2 Q980.2 433.2 979.6 434.4 H989"/></g>
<polygon points="781.24,548.13 806.24,553.10 829.78,562.85 850.97,577.01 868.99,595.03 883.15,616.22 892.90,639.76 897.87,664.76 897.87,690.24 892.90,715.24 883.15,738.78 868.99,759.97 850.97,777.99 829.78,792.15 806.24,801.90 781.24,806.87 755.76,806.87 730.76,801.90 707.22,792.15 686.03,777.99 668.01,759.97 653.85,738.78 644.10,715.24 639.13,690.24 639.13,664.76 644.10,639.76 653.85,616.22 668.01,595.03 686.03,577.01 707.22,562.85 730.76,553.10 755.76,548.13" fill="none" stroke="#0a0a0a" stroke-width="2"/>
<polygon points="779.67,564.05 801.59,568.41 822.24,576.96 840.82,589.38 856.62,605.18 869.04,623.76 877.59,644.41 881.95,666.33 881.95,688.67 877.59,710.59 869.04,731.24 856.62,749.82 840.82,765.62 822.24,778.04 801.59,786.59 779.67,790.95 757.33,790.95 735.41,786.59 714.76,778.04 696.18,765.62 680.38,749.82 667.96,731.24 659.41,710.59 655.05,688.67 655.05,666.33 659.41,644.41 667.96,623.76 680.38,605.18 696.18,589.38 714.76,576.96 735.41,568.41 757.33,564.05" fill="none" stroke="#666" stroke-width="1.1" stroke-dasharray="7 4"/>
<polygon points="778.06,580.47 796.80,584.20 814.46,591.51 830.35,602.13 843.87,615.65 854.49,631.54 861.80,649.20 865.53,667.94 865.53,687.06 861.80,705.80 854.49,723.46 843.87,739.35 830.35,752.87 814.46,763.49 796.80,770.80 778.06,774.53 758.94,774.53 740.20,770.80 722.54,763.49 706.65,752.87 693.13,739.35 682.51,723.46 675.20,705.80 671.47,687.06 671.47,667.94 675.20,649.20 682.51,631.54 693.13,615.65 706.65,602.13 722.54,591.51 740.20,584.20 758.94,580.47" fill="none" stroke="#0a0a0a" stroke-width="2.2"/>
<polygon points="777.03,590.92 793.75,594.25 809.51,600.77 823.69,610.25 835.75,622.31 845.23,636.49 851.75,652.25 855.08,668.97 855.08,686.03 851.75,702.75 845.23,718.51 835.75,732.69 823.69,744.75 809.51,754.23 793.75,760.75 777.03,764.08 759.97,764.08 743.25,760.75 727.49,754.23 713.31,744.75 701.25,732.69 691.77,718.51 685.25,702.75 681.92,686.03 681.92,668.97 685.25,652.25 691.77,636.49 701.25,622.31 713.31,610.25 727.49,600.77 743.25,594.25 759.97,590.92" fill="none" stroke="#0a0a0a" stroke-width="2.2"/>
<polygon points="778.64,626.50 797.39,634.26 811.74,648.61 819.50,667.36 819.50,687.64 811.74,706.39 797.39,720.74 778.64,728.50 758.36,728.50 739.61,720.74 725.26,706.39 717.50,687.64 717.50,667.36 725.26,648.61 739.61,634.26 758.36,626.50" fill="none" stroke="#0a0a0a" stroke-width="2"/>
<polygon points="775.91,640.23 789.61,645.90 800.10,656.39 805.77,670.09 805.77,684.91 800.10,698.61 789.61,709.10 775.91,714.77 773.50,715.00 773.50,720.50 763.50,720.50 763.50,715.00 761.09,714.77 747.39,709.10 736.90,698.61 731.23,684.91 731.23,670.09 736.90,656.39 747.39,645.90 761.09,640.23" fill="none" stroke="#0a0a0a" stroke-width="2"/>
<path d="M628 677.5 H755 M761 677.5 H775 M781 677.5 H908 M768.5 537 V664 M768.5 670 V684 M768.5 690 V817" stroke="#2222ee" stroke-width="1.5"/>
<text x="365.5" y="953" font-size="15" fill="#111" textLength="71.00" lengthAdjust="spacingAndGlyphs" >9.08494 in</text>
<rect x="360" y="958" width="1318" height="22" fill="#e4e6e9" />
<line x1="360" y1="980.5" x2="1678" y2="980.5" stroke="#f6f7f8" stroke-width="1" />
<line x1="359.5" y1="981.5" x2="1679" y2="981.5" stroke="#c6c8cb" stroke-width="1" />
<path d="M365.6 965 V972" stroke="#555" stroke-width="1.3"/><path d="M371.5 965 L366.5 968.5 L371.5 972 Z" fill="#555"/>
<path d="M386 965 L381 968.5 L386 972 Z M396 965 L401 968.5 L396 972 Z" fill="#5a5a5a"/>
<path d="M415.4 965 V972" stroke="#555" stroke-width="1.3"/><path d="M410 965 L415 968.5 L410 972 Z" fill="#555"/>
<rect x="423" y="958" width="54" height="19" fill="#fcfcfc" />
<path d="M422.5 958 V977.5 H477.5 V958" fill="none" stroke="#d0d2d5"/>
<text x="433" y="973" font-size="12" fill="#111" textLength="34.00" lengthAdjust="spacingAndGlyphs" >Sheet1</text>
<path d="M485 968.5 H496 M490.5 963 V974" stroke="#9a9ca0" stroke-width="1.6"/>
<text x="6" y="1000" font-size="12" fill="#333" textLength="138.00" lengthAdjust="spacingAndGlyphs" >Select command or entity.</text>
<line x1="1234.5" y1="984" x2="1234.5" y2="1009" stroke="#666" stroke-width="1" />
<rect x="1242.5" y="985.5" width="22" height="21" fill="#fbd94c" stroke="#e2a232" stroke-width="1.6"/>
<g transform="translate(1246,989)"><rect x="0.5" y="0.5" width="13.5" height="13.5" fill="#fff" stroke="#3a6ac8"/><rect x="1" y="1" width="12.5" height="2" fill="#7aa8e8"/><path d="M2.5 5.5 V6.5 M2.5 8 V9 M2.5 10.5 V11.5" stroke="#333" stroke-width="1"/><rect x="4" y="3.5" width="0.8" height="10" fill="#3a6ac8"/><path d="M6.5 5.5 Q9 4 12 5.5 M9.5 5 V12.5" fill="none" stroke="#d01a1a" stroke-width="2"/></g>
<defs><linearGradient id="scr" x1="0" y1="0" x2="0" y2="1"><stop offset="0" stop-color="#2aa8c8"/><stop offset="1" stop-color="#6fd8f0"/></linearGradient></defs>
<g transform="translate(1275,989.5)"><rect x="0.5" y="0.5" width="13.5" height="9" fill="url(#scr)" stroke="#2a7a98" stroke-width=".8"/><rect x="4" y="10" width="6.5" height="2" fill="#333"/></g>
<g transform="translate(1304,989)"><rect x="0.5" y="0.5" width="13.5" height="13.5" fill="#fff" stroke="#3a6ac8"/><rect x="1" y="1" width="12.5" height="2" fill="#7aa8e8"/><path d="M2.5 5.5 H11.5 M2.5 7.5 H11.5 M2.5 9.5 H11.5 M2.5 11.5 H11.5" stroke="#555" stroke-width=".8"/></g>
<rect x="1329.5" y="985.5" width="1348" height="21" fill="#fff" stroke="#b9bbbe"/>
</svg></body></html>
